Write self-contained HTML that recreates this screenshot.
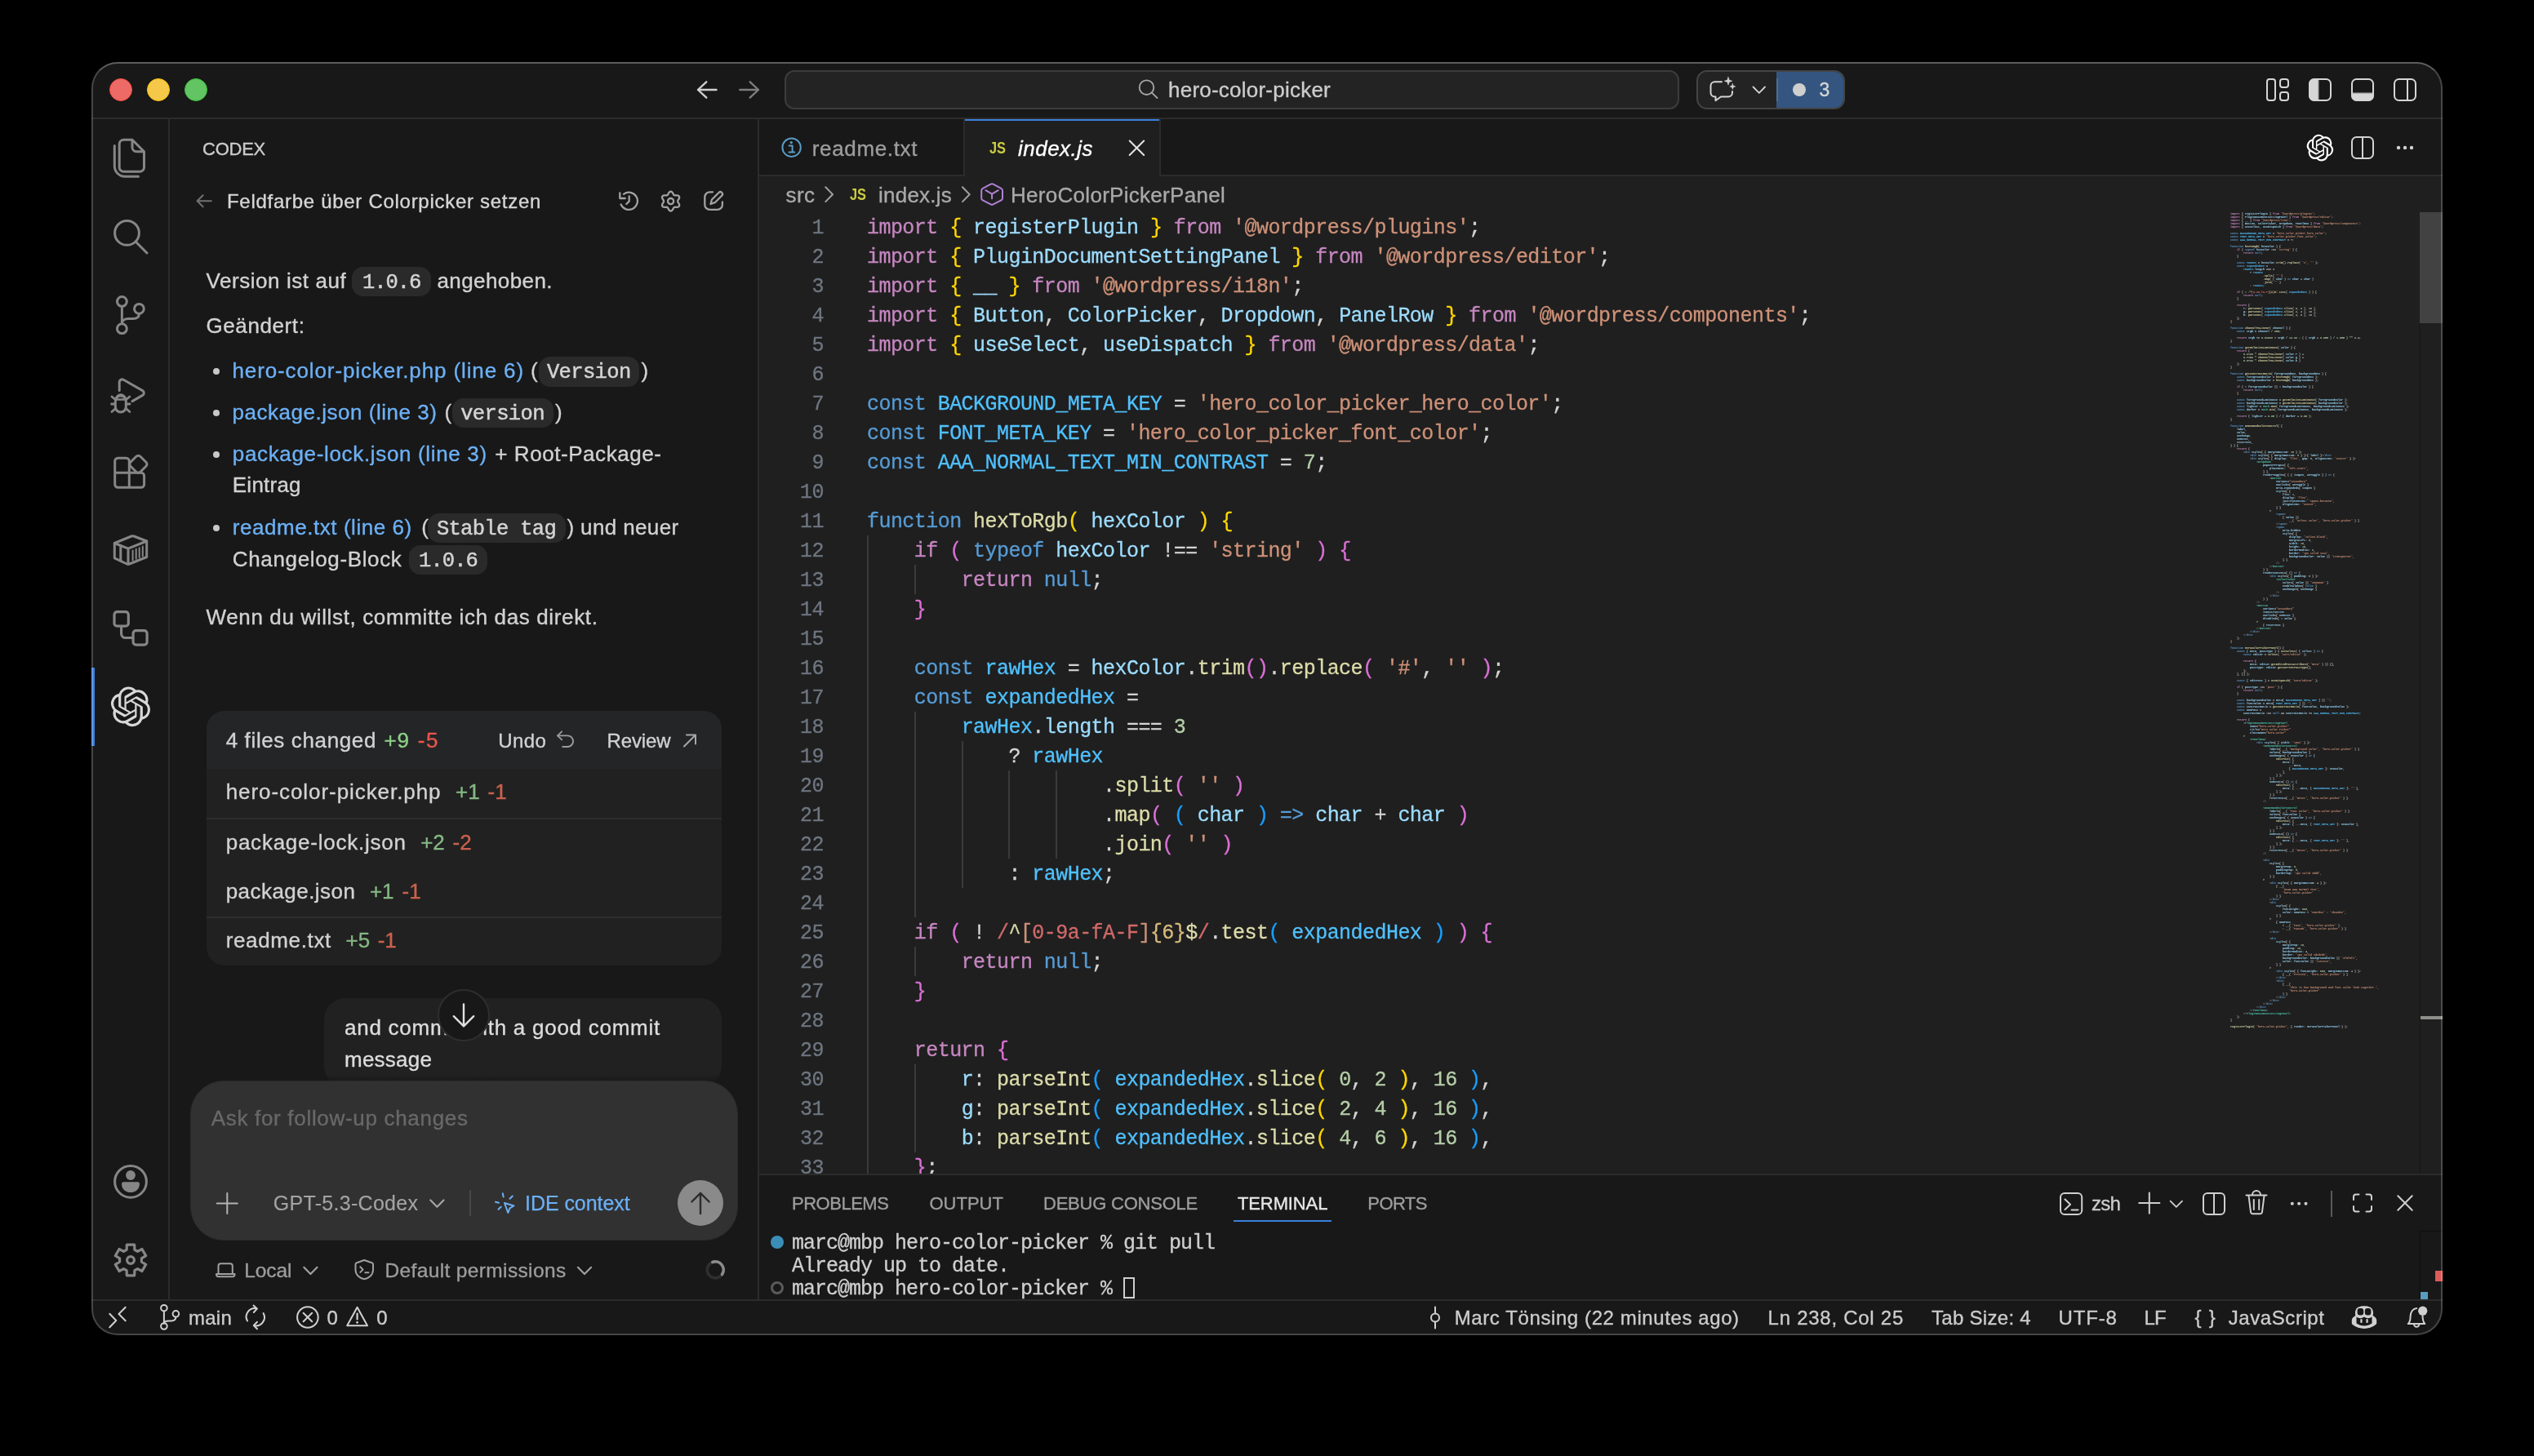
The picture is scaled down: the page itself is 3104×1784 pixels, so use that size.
<!DOCTYPE html>
<html><head><meta charset="utf-8"><title>hero-color-picker</title>
<style>
html,body{margin:0;padding:0;background:#000;}
body{width:3104px;height:1784px;overflow:hidden;position:relative;font-family:"Liberation Sans",sans-serif;}
#root{position:absolute;left:0;top:0;width:3104px;height:1784px;will-change:transform;}
.a{position:absolute;}
.t{position:absolute;white-space:pre;-webkit-text-stroke:0.35px;}
#win{position:absolute;left:112px;top:76px;width:2880px;height:1560px;border-radius:32px;background:#181818;overflow:hidden;}
#win>*{position:absolute;}
#frame{position:absolute;left:112px;top:76px;width:2880px;height:1560px;border-radius:32px;box-sizing:border-box;border:2px solid rgba(255,255,255,0.2);border-top-color:rgba(255,255,255,0.3);pointer-events:none;}
.code{position:absolute;left:0;white-space:pre;font-family:"Liberation Mono",monospace;font-size:25px;line-height:36px;height:36px;color:#d4d4d4;letter-spacing:-0.55px;-webkit-text-stroke:0.3px;}
.ln{position:absolute;white-space:pre;font-family:"Liberation Mono",monospace;font-size:25px;line-height:36px;height:36px;color:#6e7681;text-align:right;width:80px;letter-spacing:-0.55px;-webkit-text-stroke:0.3px;}
.g{position:absolute;width:2px;background:#3a3a3a;}
.k{color:#c586c0}.s{color:#569cd6}.v{color:#9cdcfe}.c{color:#4fc1ff}.f{color:#dcdcaa}.q{color:#ce9178}.n{color:#b5cea8}.b1{color:#ffd700}.b2{color:#da70d6}.b3{color:#179fff}.r{color:#d16969}.rq{color:#d7ba7d}.ty{color:#4ec9b0}.tg{color:#808080}
#mm{position:absolute;left:0;top:0;margin:0;font-family:"Liberation Mono",monospace;font-size:24px;line-height:36px;letter-spacing:0;color:#d4d4d4;transform-origin:0 0;transform:scale(0.13889,0.11111);opacity:0.95;font-weight:700;}
#mm i{font-style:normal}
#mm .b1,#mm .b2,#mm .b3{color:#d4d4d4}
svg{position:absolute;overflow:visible;}
</style></head><body>
<div id="root"><div id="win"></div>
<div class="a" style="left:930px;top:146px;width:2062px;height:1292px;background:#1f1f1f;"></div>
<div class="a" style="left:112px;top:144px;width:2880px;height:2px;background:#2b2b2b;"></div>
<div class="a" style="left:206px;top:146px;width:2px;height:1446px;background:#2b2b2b;"></div>
<div class="a" style="left:928px;top:146px;width:2px;height:1446px;background:#2b2b2b;"></div>
<div class="a" style="left:112px;top:1592px;width:2880px;height:2px;background:#2b2b2b;"></div>
<div class="a" style="left:930px;top:1438px;width:2062px;height:154px;background:#181818;"></div>
<div class="a" style="left:930px;top:1438px;width:2062px;height:2px;background:#2b2b2b;"></div>
<div class="a" style="left:930px;top:146px;width:2062px;height:70px;background:#181818;"></div>
<div class="a" style="left:930px;top:214px;width:2062px;height:2px;background:#2b2b2b;"></div>
<div class="a" style="left:1180px;top:146px;width:2px;height:68px;background:#2b2b2b;"></div>
<div class="a" style="left:1182px;top:146px;width:238px;height:70px;background:#1f1f1f;"></div>
<div class="a" style="left:1182px;top:146px;width:238px;height:2px;background:#3a7fdc;"></div>
<div class="a" style="left:1420px;top:146px;width:2px;height:68px;background:#2b2b2b;"></div>
<div class="a" style="left:134px;top:96px;width:28px;height:28px;background:#ed6a67;border-radius:50%;box-sizing:border-box;border:1px solid #fa4a42;"></div>
<div class="a" style="left:180px;top:96px;width:28px;height:28px;background:#f5c84a;border-radius:50%;box-sizing:border-box;border:1px solid #f9c20a;"></div>
<div class="a" style="left:226px;top:96px;width:28px;height:28px;background:#62c463;border-radius:50%;box-sizing:border-box;border:1px solid #3ec13c;"></div>
<div class="a" style="left:961px;top:86px;width:1096px;height:48px;background:#232323;border-radius:12px;box-sizing:border-box;border:2px solid #3c3c3c;"></div>
<div class="a" style="left:2078px;top:86px;width:182px;height:48px;background:#232323;border-radius:13px;box-sizing:border-box;border:2px solid #444444;overflow:hidden;"></div>
<div class="a" style="left:2176px;top:88px;width:82px;height:44px;background:#34557f;border-radius:0 11px 11px 0;"></div>
<div class="a" style="left:2176px;top:96px;width:2px;height:28px;background:#4f6d94;"></div>
<div class="a" style="left:2196px;top:102px;width:16px;height:16px;background:#cfcfcf;border-radius:50%;"></div>
<div class="a" style="left:431px;top:326.8px;width:96.5px;height:36.5px;background:#2a2a2a;border-radius:14px;"></div>
<div class="a" style="left:261px;top:451.1px;width:8px;height:8px;background:#c8c8c8;border-radius:50%;"></div>
<div class="a" style="left:261px;top:501.9px;width:8px;height:8px;background:#c8c8c8;border-radius:50%;"></div>
<div class="a" style="left:261px;top:552.7px;width:8px;height:8px;background:#c8c8c8;border-radius:50%;"></div>
<div class="a" style="left:261px;top:642.7px;width:8px;height:8px;background:#c8c8c8;border-radius:50%;"></div>
<div class="a" style="left:659.5px;top:437.1px;width:123.7px;height:36.5px;background:#2a2a2a;border-radius:14px;"></div>
<div class="a" style="left:553.8px;top:487.9px;width:124.2px;height:36.5px;background:#2a2a2a;border-radius:14px;"></div>
<div class="a" style="left:524px;top:628.7px;width:169px;height:36.5px;background:#2a2a2a;border-radius:14px;"></div>
<div class="a" style="left:501px;top:667.5px;width:96px;height:36.5px;background:#2a2a2a;border-radius:14px;"></div>
<div class="a" style="left:252.5px;top:871px;width:631.5px;height:311.5px;background:#212121;border-radius:22px;overflow:hidden;"></div>
<div class="a" style="left:252.5px;top:871px;width:631.5px;height:71px;background:#242527;border-radius:22px 22px 0 0;"></div>
<div class="a" style="left:252.5px;top:1002px;width:631.5px;height:1.5px;background:#2d2d2d;"></div>
<div class="a" style="left:252.5px;top:1123px;width:631.5px;height:1.5px;background:#2d2d2d;"></div>
<div class="a" style="left:397px;top:1223px;width:487px;height:109px;background:#212121;border-radius:26px;"></div>
<div class="a" style="left:930px;top:260px;width:2034px;height:1178px;overflow:hidden;">
<div class="g" style="left:132.0px;top:396px;height:792px;"></div>
<div class="g" style="left:189.8px;top:432px;height:36px;"></div>
<div class="g" style="left:189.8px;top:612px;height:252px;"></div>
<div class="g" style="left:189.8px;top:900px;height:36px;"></div>
<div class="g" style="left:189.8px;top:1044px;height:108px;"></div>
<div class="g" style="left:247.6px;top:648px;height:180px;"></div>
<div class="g" style="left:305.4px;top:684px;height:108px;"></div>
<div class="g" style="left:363.2px;top:684px;height:108px;"></div>
<div class="ln" style="left:0;top:2px;width:79px;">1</div>
<div class="code" style="left:132px;top:2px;"><span class="k">import</span> <span class="b1">{</span> <span class="v">registerPlugin</span> <span class="b1">}</span> <span class="k">from</span> <span class="q">&#x27;@wordpress/plugins&#x27;</span>;</div>
<div class="ln" style="left:0;top:38px;width:79px;">2</div>
<div class="code" style="left:132px;top:38px;"><span class="k">import</span> <span class="b1">{</span> <span class="v">PluginDocumentSettingPanel</span> <span class="b1">}</span> <span class="k">from</span> <span class="q">&#x27;@wordpress/editor&#x27;</span>;</div>
<div class="ln" style="left:0;top:74px;width:79px;">3</div>
<div class="code" style="left:132px;top:74px;"><span class="k">import</span> <span class="b1">{</span> <span class="v">__</span> <span class="b1">}</span> <span class="k">from</span> <span class="q">&#x27;@wordpress/i18n&#x27;</span>;</div>
<div class="ln" style="left:0;top:110px;width:79px;">4</div>
<div class="code" style="left:132px;top:110px;"><span class="k">import</span> <span class="b1">{</span> <span class="v">Button</span>, <span class="v">ColorPicker</span>, <span class="v">Dropdown</span>, <span class="v">PanelRow</span> <span class="b1">}</span> <span class="k">from</span> <span class="q">&#x27;@wordpress/components&#x27;</span>;</div>
<div class="ln" style="left:0;top:146px;width:79px;">5</div>
<div class="code" style="left:132px;top:146px;"><span class="k">import</span> <span class="b1">{</span> <span class="v">useSelect</span>, <span class="v">useDispatch</span> <span class="b1">}</span> <span class="k">from</span> <span class="q">&#x27;@wordpress/data&#x27;</span>;</div>
<div class="ln" style="left:0;top:182px;width:79px;">6</div>
<div class="ln" style="left:0;top:218px;width:79px;">7</div>
<div class="code" style="left:132px;top:218px;"><span class="s">const</span> <span class="c">BACKGROUND_META_KEY</span> = <span class="q">&#x27;hero_color_picker_hero_color&#x27;</span>;</div>
<div class="ln" style="left:0;top:254px;width:79px;">8</div>
<div class="code" style="left:132px;top:254px;"><span class="s">const</span> <span class="c">FONT_META_KEY</span> = <span class="q">&#x27;hero_color_picker_font_color&#x27;</span>;</div>
<div class="ln" style="left:0;top:290px;width:79px;">9</div>
<div class="code" style="left:132px;top:290px;"><span class="s">const</span> <span class="c">AAA_NORMAL_TEXT_MIN_CONTRAST</span> = <span class="n">7</span>;</div>
<div class="ln" style="left:0;top:326px;width:79px;">10</div>
<div class="ln" style="left:0;top:362px;width:79px;">11</div>
<div class="code" style="left:132px;top:362px;"><span class="s">function</span> <span class="f">hexToRgb</span><span class="b1">(</span> <span class="v">hexColor</span> <span class="b1">)</span> <span class="b1">{</span></div>
<div class="ln" style="left:0;top:398px;width:79px;">12</div>
<div class="code" style="left:132px;top:398px;">    <span class="k">if</span> <span class="b2">(</span> <span class="s">typeof</span> <span class="v">hexColor</span> !== <span class="q">&#x27;string&#x27;</span> <span class="b2">)</span> <span class="b2">{</span></div>
<div class="ln" style="left:0;top:434px;width:79px;">13</div>
<div class="code" style="left:132px;top:434px;">        <span class="k">return</span> <span class="s">null</span>;</div>
<div class="ln" style="left:0;top:470px;width:79px;">14</div>
<div class="code" style="left:132px;top:470px;">    <span class="b2">}</span></div>
<div class="ln" style="left:0;top:506px;width:79px;">15</div>
<div class="ln" style="left:0;top:542px;width:79px;">16</div>
<div class="code" style="left:132px;top:542px;">    <span class="s">const</span> <span class="c">rawHex</span> = <span class="v">hexColor</span>.<span class="f">trim</span><span class="b2">()</span>.<span class="f">replace</span><span class="b2">(</span> <span class="q">&#x27;#&#x27;</span>, <span class="q">&#x27;&#x27;</span> <span class="b2">)</span>;</div>
<div class="ln" style="left:0;top:578px;width:79px;">17</div>
<div class="code" style="left:132px;top:578px;">    <span class="s">const</span> <span class="c">expandedHex</span> =</div>
<div class="ln" style="left:0;top:614px;width:79px;">18</div>
<div class="code" style="left:132px;top:614px;">        <span class="c">rawHex</span>.<span class="v">length</span> === <span class="n">3</span></div>
<div class="ln" style="left:0;top:650px;width:79px;">19</div>
<div class="code" style="left:132px;top:650px;">            ? <span class="c">rawHex</span></div>
<div class="ln" style="left:0;top:686px;width:79px;">20</div>
<div class="code" style="left:132px;top:686px;">                    .<span class="f">split</span><span class="b2">(</span> <span class="q">&#x27;&#x27;</span> <span class="b2">)</span></div>
<div class="ln" style="left:0;top:722px;width:79px;">21</div>
<div class="code" style="left:132px;top:722px;">                    .<span class="f">map</span><span class="b2">(</span> <span class="b3">(</span> <span class="v">char</span> <span class="b3">)</span> <span class="s">=&gt;</span> <span class="v">char</span> + <span class="v">char</span> <span class="b2">)</span></div>
<div class="ln" style="left:0;top:758px;width:79px;">22</div>
<div class="code" style="left:132px;top:758px;">                    .<span class="f">join</span><span class="b2">(</span> <span class="q">&#x27;&#x27;</span> <span class="b2">)</span></div>
<div class="ln" style="left:0;top:794px;width:79px;">23</div>
<div class="code" style="left:132px;top:794px;">            : <span class="c">rawHex</span>;</div>
<div class="ln" style="left:0;top:830px;width:79px;">24</div>
<div class="ln" style="left:0;top:866px;width:79px;">25</div>
<div class="code" style="left:132px;top:866px;">    <span class="k">if</span> <span class="b2">(</span> ! <span class="r">/</span><span class="f">^</span><span class="q">[</span><span class="r">0-9a-fA-F</span><span class="q">]</span><span class="rq">{6}</span><span class="f">$</span><span class="r">/</span>.<span class="f">test</span><span class="b3">(</span> <span class="c">expandedHex</span> <span class="b3">)</span> <span class="b2">)</span> <span class="b2">{</span></div>
<div class="ln" style="left:0;top:902px;width:79px;">26</div>
<div class="code" style="left:132px;top:902px;">        <span class="k">return</span> <span class="s">null</span>;</div>
<div class="ln" style="left:0;top:938px;width:79px;">27</div>
<div class="code" style="left:132px;top:938px;">    <span class="b2">}</span></div>
<div class="ln" style="left:0;top:974px;width:79px;">28</div>
<div class="ln" style="left:0;top:1010px;width:79px;">29</div>
<div class="code" style="left:132px;top:1010px;">    <span class="k">return</span> <span class="b2">{</span></div>
<div class="ln" style="left:0;top:1046px;width:79px;">30</div>
<div class="code" style="left:132px;top:1046px;">        <span class="v">r</span>: <span class="f">parseInt</span><span class="b3">(</span> <span class="c">expandedHex</span>.<span class="f">slice</span><span class="b1">(</span> <span class="n">0</span>, <span class="n">2</span> <span class="b1">)</span>, <span class="n">16</span> <span class="b3">)</span>,</div>
<div class="ln" style="left:0;top:1082px;width:79px;">31</div>
<div class="code" style="left:132px;top:1082px;">        <span class="v">g</span>: <span class="f">parseInt</span><span class="b3">(</span> <span class="c">expandedHex</span>.<span class="f">slice</span><span class="b1">(</span> <span class="n">2</span>, <span class="n">4</span> <span class="b1">)</span>, <span class="n">16</span> <span class="b3">)</span>,</div>
<div class="ln" style="left:0;top:1118px;width:79px;">32</div>
<div class="code" style="left:132px;top:1118px;">        <span class="v">b</span>: <span class="f">parseInt</span><span class="b3">(</span> <span class="c">expandedHex</span>.<span class="f">slice</span><span class="b1">(</span> <span class="n">4</span>, <span class="n">6</span> <span class="b1">)</span>, <span class="n">16</span> <span class="b3">)</span>,</div>
<div class="ln" style="left:0;top:1154px;width:79px;">33</div>
<div class="code" style="left:132px;top:1154px;">    <span class="b2">}</span>;</div>
</div>
<div class="a" style="left:2732px;top:260px;width:232px;height:1178px;overflow:hidden;"><pre id="mm"><i class="k">import</i> <i class="b1">{</i> <i class="v">registerPlugin</i> <i class="b1">}</i> <i class="k">from</i> <i class="q">&#x27;@wordpress/plugins&#x27;</i>;
<i class="k">import</i> <i class="b1">{</i> <i class="v">PluginDocumentSettingPanel</i> <i class="b1">}</i> <i class="k">from</i> <i class="q">&#x27;@wordpress/editor&#x27;</i>;
<i class="k">import</i> <i class="b1">{</i> <i class="v">__</i> <i class="b1">}</i> <i class="k">from</i> <i class="q">&#x27;@wordpress/i18n&#x27;</i>;
<i class="k">import</i> <i class="b1">{</i> <i class="v">Button</i>, <i class="v">ColorPicker</i>, <i class="v">Dropdown</i>, <i class="v">PanelRow</i> <i class="b1">}</i> <i class="k">from</i> <i class="q">&#x27;@wordpress/components&#x27;</i>;
<i class="k">import</i> <i class="b1">{</i> <i class="v">useSelect</i>, <i class="v">useDispatch</i> <i class="b1">}</i> <i class="k">from</i> <i class="q">&#x27;@wordpress/data&#x27;</i>;

<i class="s">const</i> <i class="c">BACKGROUND_META_KEY</i> = <i class="q">&#x27;hero_color_picker_hero_color&#x27;</i>;
<i class="s">const</i> <i class="c">FONT_META_KEY</i> = <i class="q">&#x27;hero_color_picker_font_color&#x27;</i>;
<i class="s">const</i> <i class="c">AAA_NORMAL_TEXT_MIN_CONTRAST</i> = <i class="n">7</i>;

<i class="s">function</i> <i class="f">hexToRgb</i><i class="b1">(</i> <i class="v">hexColor</i> <i class="b1">)</i> <i class="b1">{</i>
    <i class="k">if</i> <i class="b2">(</i> <i class="s">typeof</i> <i class="v">hexColor</i> !== <i class="q">&#x27;string&#x27;</i> <i class="b2">)</i> <i class="b2">{</i>
        <i class="k">return</i> <i class="s">null</i>;
    <i class="b2">}</i>

    <i class="s">const</i> <i class="c">rawHex</i> = <i class="v">hexColor</i>.<i class="f">trim</i><i class="b2">()</i>.<i class="f">replace</i><i class="b2">(</i> <i class="q">&#x27;#&#x27;</i>, <i class="q">&#x27;&#x27;</i> <i class="b2">)</i>;
    <i class="s">const</i> <i class="c">expandedHex</i> =
        <i class="c">rawHex</i>.<i class="v">length</i> === <i class="n">3</i>
            ? <i class="c">rawHex</i>
                    .<i class="f">split</i><i class="b2">(</i> <i class="q">&#x27;&#x27;</i> <i class="b2">)</i>
                    .<i class="f">map</i><i class="b2">(</i> <i class="b3">(</i> <i class="v">char</i> <i class="b3">)</i> <i class="s">=&gt;</i> <i class="v">char</i> + <i class="v">char</i> <i class="b2">)</i>
                    .<i class="f">join</i><i class="b2">(</i> <i class="q">&#x27;&#x27;</i> <i class="b2">)</i>
            : <i class="c">rawHex</i>;

    <i class="k">if</i> <i class="b2">(</i> ! <i class="r">/</i><i class="f">^</i><i class="q">[</i><i class="r">0-9a-fA-F</i><i class="q">]</i><i class="rq">{6}</i><i class="f">$</i><i class="r">/</i>.<i class="f">test</i><i class="b3">(</i> <i class="c">expandedHex</i> <i class="b3">)</i> <i class="b2">)</i> <i class="b2">{</i>
        <i class="k">return</i> <i class="s">null</i>;
    <i class="b2">}</i>

    <i class="k">return</i> <i class="b2">{</i>
        <i class="v">r</i>: <i class="f">parseInt</i><i class="b3">(</i> <i class="c">expandedHex</i>.<i class="f">slice</i><i class="b1">(</i> <i class="n">0</i>, <i class="n">2</i> <i class="b1">)</i>, <i class="n">16</i> <i class="b3">)</i>,
        <i class="v">g</i>: <i class="f">parseInt</i><i class="b3">(</i> <i class="c">expandedHex</i>.<i class="f">slice</i><i class="b1">(</i> <i class="n">2</i>, <i class="n">4</i> <i class="b1">)</i>, <i class="n">16</i> <i class="b3">)</i>,
        <i class="v">b</i>: <i class="f">parseInt</i><i class="b3">(</i> <i class="c">expandedHex</i>.<i class="f">slice</i><i class="b1">(</i> <i class="n">4</i>, <i class="n">6</i> <i class="b1">)</i>, <i class="n">16</i> <i class="b3">)</i>,
    <i class="b2">}</i>;
<i class="b1">}</i>

<i class="s">function</i> <i class="f">channelToLinear</i><i class="b1">(</i> <i class="v">channel</i> <i class="b1">)</i> <i class="b1">{</i>
    <i class="s">const</i> <i class="v">srgb</i> = <i class="v">channel</i> / <i class="n">255</i>;

    <i class="k">return</i> <i class="v">srgb</i> &lt;= <i class="n">0.03928</i> ? <i class="v">srgb</i> / <i class="n">12.92</i> : <i class="b2">(</i> <i class="b3">(</i> <i class="v">srgb</i> + <i class="n">0.055</i> <i class="b3">)</i> / <i class="n">1.055</i> <i class="b2">)</i> ** <i class="n">2.4</i>;
<i class="b1">}</i>

<i class="s">function</i> <i class="f">getRelativeLuminance</i><i class="b1">(</i> <i class="v">color</i> <i class="b1">)</i> <i class="b1">{</i>
    <i class="k">return</i> <i class="b2">(</i>
        <i class="n">0.2126</i> * <i class="f">channelToLinear</i><i class="b3">(</i> <i class="v">color</i>.<i class="v">r</i> <i class="b3">)</i> +
        <i class="n">0.7152</i> * <i class="f">channelToLinear</i><i class="b3">(</i> <i class="v">color</i>.<i class="v">g</i> <i class="b3">)</i> +
        <i class="n">0.0722</i> * <i class="f">channelToLinear</i><i class="b3">(</i> <i class="v">color</i>.<i class="v">b</i> <i class="b3">)</i>
    <i class="b2">)</i>;
<i class="b1">}</i>

<i class="s">function</i> <i class="f">getContrastRatio</i><i class="b1">(</i> <i class="v">foregroundHex</i>, <i class="v">backgroundHex</i> <i class="b1">)</i> <i class="b1">{</i>
    <i class="s">const</i> <i class="v">foregroundColor</i> = <i class="f">hexToRgb</i><i class="b2">(</i> <i class="v">foregroundHex</i> <i class="b2">)</i>;
    <i class="s">const</i> <i class="v">backgroundColor</i> = <i class="f">hexToRgb</i><i class="b2">(</i> <i class="v">backgroundHex</i> <i class="b2">)</i>;

    <i class="k">if</i> <i class="b2">(</i> ! <i class="v">foregroundColor</i> || ! <i class="v">backgroundColor</i> <i class="b2">)</i> <i class="b2">{</i>
        <i class="k">return</i> <i class="s">null</i>;
    <i class="b2">}</i>

    <i class="s">const</i> <i class="v">foregroundLuminance</i> = <i class="f">getRelativeLuminance</i><i class="b2">(</i> <i class="v">foregroundColor</i> <i class="b2">)</i>;
    <i class="s">const</i> <i class="v">backgroundLuminance</i> = <i class="f">getRelativeLuminance</i><i class="b2">(</i> <i class="v">backgroundColor</i> <i class="b2">)</i>;
    <i class="s">const</i> <i class="v">lighter</i> = <i class="ty">Math</i>.<i class="f">max</i><i class="b2">(</i> <i class="v">foregroundLuminance</i>, <i class="v">backgroundLuminance</i> <i class="b2">)</i>;
    <i class="s">const</i> <i class="v">darker</i> = <i class="ty">Math</i>.<i class="f">min</i><i class="b2">(</i> <i class="v">foregroundLuminance</i>, <i class="v">backgroundLuminance</i> <i class="b2">)</i>;

    <i class="k">return</i> <i class="b2">(</i> <i class="v">lighter</i> + <i class="n">0.05</i> <i class="b2">)</i> / <i class="b2">(</i> <i class="v">darker</i> + <i class="n">0.05</i> <i class="b2">)</i>;
<i class="b1">}</i>

<i class="s">function</i> <i class="f">OnDemandColorControl</i><i class="b1">(</i> <i class="b2">{</i>
    <i class="v">label</i>,
    <i class="v">value</i>,
    <i class="v">onChange</i>,
    <i class="v">onReset</i>,
    <i class="v">resetText</i>,
<i class="b2">}</i> <i class="b1">)</i> <i class="b1">{</i>
    <i class="k">return</i> <i class="b2">(</i>
        <i class="tg">&lt;</i><i class="s">div</i> <i class="v">style</i>=<i class="b3">{</i> <i class="b1">{</i> <i class="v">marginBottom</i>: <i class="n">16</i> <i class="b1">}</i> <i class="b3">}</i><i class="tg">&gt;</i>
            <i class="tg">&lt;</i><i class="s">div</i> <i class="v">style</i>=<i class="b3">{</i> <i class="b1">{</i> <i class="v">marginBottom</i>: <i class="n">8</i> <i class="b1">}</i> <i class="b3">}</i><i class="tg">&gt;</i><i class="b3">{</i> <i class="v">label</i> <i class="b3">}</i><i class="tg">&lt;/</i><i class="s">div</i><i class="tg">&gt;</i>
            <i class="tg">&lt;</i><i class="s">div</i> <i class="v">style</i>=<i class="b3">{</i> <i class="b1">{</i> <i class="v">display</i>: <i class="q">&#x27;flex&#x27;</i>, <i class="v">gap</i>: <i class="n">8</i>, <i class="v">alignItems</i>: <i class="q">&#x27;center&#x27;</i> <i class="b1">}</i> <i class="b3">}</i><i class="tg">&gt;</i>
                <i class="tg">&lt;</i><i class="ty">Dropdown</i>
                    <i class="v">popoverProps</i>=<i class="b3">{</i> <i class="b1">{</i>
                        <i class="v">placement</i>: <i class="q">&#x27;left-start&#x27;</i>,
                    <i class="b1">}</i> <i class="b3">}</i>
                    <i class="v">renderToggle</i>=<i class="b3">{</i> <i class="b1">(</i> <i class="b2">{</i> <i class="v">isOpen</i>, <i class="v">onToggle</i> <i class="b2">}</i> <i class="b1">)</i> <i class="s">=&gt;</i> <i class="b1">(</i>
                        <i class="tg">&lt;</i><i class="ty">Button</i>
                            <i class="v">variant</i>=<i class="q">&quot;secondary&quot;</i>
                            <i class="v">onClick</i>=<i class="b2">{</i> <i class="v">onToggle</i> <i class="b2">}</i>
                            <i class="v">aria-expanded</i>=<i class="b2">{</i> <i class="v">isOpen</i> <i class="b2">}</i>
                            <i class="v">style</i>=<i class="b2">{</i> <i class="b3">{</i>
                                <i class="v">flex</i>: <i class="n">1</i>,
                                <i class="v">display</i>: <i class="q">&#x27;flex&#x27;</i>,
                                <i class="v">justifyContent</i>: <i class="q">&#x27;space-between&#x27;</i>,
                                <i class="v">alignItems</i>: <i class="q">&#x27;center&#x27;</i>,
                            <i class="b3">}</i> <i class="b2">}</i>
                        &gt;
                            <i class="tg">&lt;</i><i class="s">span</i><i class="tg">&gt;</i>
                                <i class="b2">{</i> <i class="v">value</i> ||
                                    <i class="f">__</i><i class="b3">(</i> <i class="q">&#x27;Select color&#x27;</i>, <i class="q">&#x27;hero-color-picker&#x27;</i> <i class="b3">)</i> <i class="b2">}</i>
                            <i class="tg">&lt;/</i><i class="s">span</i><i class="tg">&gt;</i>
                            <i class="tg">&lt;</i><i class="s">span</i>
                                <i class="v">aria-hidden</i>
                                <i class="v">style</i>=<i class="b2">{</i> <i class="b3">{</i>
                                    <i class="v">display</i>: <i class="q">&#x27;inline-block&#x27;</i>,
                                    <i class="v">marginLeft</i>: <i class="n">8</i>,
                                    <i class="v">width</i>: <i class="n">16</i>,
                                    <i class="v">height</i>: <i class="n">16</i>,
                                    <i class="v">borderRadius</i>: <i class="n">2</i>,
                                    <i class="v">border</i>: <i class="q">&#x27;1px solid #ccc&#x27;</i>,
                                    <i class="v">backgroundColor</i>: <i class="v">value</i> || <i class="q">&#x27;transparent&#x27;</i>,
                                <i class="b3">}</i> <i class="b2">}</i>
                            <i class="tg">/&gt;</i>
                        <i class="tg">&lt;/</i><i class="ty">Button</i><i class="tg">&gt;</i>
                    <i class="b1">)</i> <i class="b3">}</i>
                    <i class="v">renderContent</i>=<i class="b3">{</i> <i class="b1">(</i><i class="b1">)</i> <i class="s">=&gt;</i> <i class="b1">(</i>
                        <i class="tg">&lt;</i><i class="s">div</i> <i class="v">style</i>=<i class="b2">{</i> <i class="b3">{</i> <i class="v">padding</i>: <i class="n">8</i> <i class="b3">}</i> <i class="b2">}</i><i class="tg">&gt;</i>
                            <i class="tg">&lt;</i><i class="ty">ColorPicker</i>
                                <i class="v">color</i>=<i class="b2">{</i> <i class="v">value</i> || <i class="q">&#x27;#000000&#x27;</i> <i class="b2">}</i>
                                <i class="v">enableAlpha</i>=<i class="b2">{</i> <i class="s">false</i> <i class="b2">}</i>
                                <i class="v">onChange</i>=<i class="b2">{</i> <i class="v">onChange</i> <i class="b2">}</i>
                            <i class="tg">/&gt;</i>
                        <i class="tg">&lt;/</i><i class="s">div</i><i class="tg">&gt;</i>
                    <i class="b1">)</i> <i class="b3">}</i>
                <i class="tg">/&gt;</i>
                <i class="tg">&lt;</i><i class="ty">Button</i>
                    <i class="v">variant</i>=<i class="q">&quot;secondary&quot;</i>
                    <i class="v">isDestructive</i>
                    <i class="v">onClick</i>=<i class="b3">{</i> <i class="v">onReset</i> <i class="b3">}</i>
                    <i class="v">disabled</i>=<i class="b3">{</i> ! <i class="v">value</i> <i class="b3">}</i>
                &gt;
                    <i class="b3">{</i> <i class="v">resetText</i> <i class="b3">}</i>
                <i class="tg">&lt;/</i><i class="ty">Button</i><i class="tg">&gt;</i>
            <i class="tg">&lt;/</i><i class="s">div</i><i class="tg">&gt;</i>
        <i class="tg">&lt;/</i><i class="s">div</i><i class="tg">&gt;</i>
    <i class="b2">)</i>;
<i class="b1">}</i>

<i class="s">function</i> <i class="f">HeroColorPickerPanel</i><i class="b1">(</i><i class="b1">)</i> <i class="b1">{</i>
    <i class="s">const</i> <i class="b2">{</i> <i class="v">meta</i>, <i class="v">postType</i> <i class="b2">}</i> = <i class="f">useSelect</i><i class="b2">(</i> <i class="b3">(</i> <i class="v">select</i> <i class="b3">)</i> <i class="s">=&gt;</i> <i class="b3">{</i>
        <i class="s">const</i> <i class="v">editor</i> = <i class="f">select</i><i class="b1">(</i> <i class="q">&#x27;core/editor&#x27;</i> <i class="b1">)</i>;

        <i class="k">return</i> <i class="b1">{</i>
            <i class="v">meta</i>: <i class="v">editor</i>.<i class="f">getEditedPostAttribute</i><i class="b2">(</i> <i class="q">&#x27;meta&#x27;</i> <i class="b2">)</i> || <i class="b2">{</i><i class="b2">}</i>,
            <i class="v">postType</i>: <i class="v">editor</i>.<i class="f">getCurrentPostType</i><i class="b2">(</i><i class="b2">)</i>,
        <i class="b1">}</i>;
    <i class="b3">}</i>, <i class="b3">[</i><i class="b3">]</i> <i class="b2">)</i>;

    <i class="s">const</i> <i class="b2">{</i> <i class="v">editPost</i> <i class="b2">}</i> = <i class="f">useDispatch</i><i class="b2">(</i> <i class="q">&#x27;core/editor&#x27;</i> <i class="b2">)</i>;

    <i class="k">if</i> <i class="b2">(</i> <i class="v">postType</i> !== <i class="q">&#x27;post&#x27;</i> <i class="b2">)</i> <i class="b2">{</i>
        <i class="k">return</i> <i class="s">null</i>;
    <i class="b2">}</i>

    <i class="s">const</i> <i class="v">backgroundValue</i> = <i class="v">meta</i><i class="b2">[</i> <i class="c">BACKGROUND_META_KEY</i> <i class="b2">]</i> || <i class="q">&#x27;&#x27;</i>;
    <i class="s">const</i> <i class="v">fontValue</i> = <i class="v">meta</i><i class="b2">[</i> <i class="c">FONT_META_KEY</i> <i class="b2">]</i> || <i class="q">&#x27;&#x27;</i>;
    <i class="s">const</i> <i class="v">contrastRatio</i> = <i class="f">getContrastRatio</i><i class="b2">(</i> <i class="v">fontValue</i>, <i class="v">backgroundValue</i> <i class="b2">)</i>;
    <i class="s">const</i> <i class="v">aaaPass</i> =
        <i class="v">contrastRatio</i> !== <i class="s">null</i> &amp;&amp; <i class="v">contrastRatio</i> &gt;= <i class="c">AAA_NORMAL_TEXT_MIN_CONTRAST</i>;

    <i class="k">return</i> <i class="b2">(</i>
        <i class="tg">&lt;</i><i class="ty">PluginDocumentSettingPanel</i>
            <i class="v">name</i>=<i class="q">&quot;hero-color-picker&quot;</i>
            <i class="v">title</i>=<i class="q">&quot;Hero Color Picker&quot;</i>
            <i class="v">className</i>=<i class="q">&quot;hero-color&quot;</i>
        &gt;
            <i class="tg">&lt;</i><i class="ty">PanelRow</i><i class="tg">&gt;</i>
                <i class="tg">&lt;</i><i class="s">div</i> <i class="v">style</i>=<i class="b3">{</i> <i class="b1">{</i> <i class="v">width</i>: <i class="q">&#x27;100%&#x27;</i> <i class="b1">}</i> <i class="b3">}</i><i class="tg">&gt;</i>
                    <i class="tg">&lt;</i><i class="ty">OnDemandColorControl</i>
                        <i class="v">label</i>=<i class="b3">{</i> <i class="f">__</i><i class="b1">(</i> <i class="q">&#x27;Background Color&#x27;</i>, <i class="q">&#x27;hero-color-picker&#x27;</i> <i class="b1">)</i> <i class="b3">}</i>
                        <i class="v">value</i>=<i class="b3">{</i> <i class="v">backgroundValue</i> <i class="b3">}</i>
                        <i class="v">onChange</i>=<i class="b3">{</i> <i class="b1">(</i> <i class="v">newColor</i> <i class="b1">)</i> <i class="s">=&gt;</i> <i class="b1">{</i>
                            <i class="f">editPost</i><i class="b2">(</i> <i class="b3">{</i>
                                <i class="v">meta</i>: <i class="b1">{</i>
                                    ...<i class="v">meta</i>,
                                    <i class="b2">[</i> <i class="c">BACKGROUND_META_KEY</i> <i class="b2">]</i>: <i class="v">newColor</i>,
                                <i class="b1">}</i>,
                            <i class="b3">}</i> <i class="b2">)</i>;
                        <i class="b1">}</i> <i class="b3">}</i>
                        <i class="v">onReset</i>=<i class="b3">{</i> <i class="b1">(</i><i class="b1">)</i> <i class="s">=&gt;</i> <i class="b1">{</i>
                            <i class="f">editPost</i><i class="b2">(</i> <i class="b3">{</i>
                                <i class="v">meta</i>: <i class="b1">{</i> ...<i class="v">meta</i>, <i class="b2">[</i> <i class="c">BACKGROUND_META_KEY</i> <i class="b2">]</i>: <i class="q">&#x27;&#x27;</i> <i class="b1">}</i>,
                            <i class="b3">}</i> <i class="b2">)</i>;
                        <i class="b1">}</i> <i class="b3">}</i>
                        <i class="v">resetText</i>=<i class="b3">{</i> <i class="f">__</i><i class="b1">(</i> <i class="q">&#x27;Reset&#x27;</i>, <i class="q">&#x27;hero-color-picker&#x27;</i> <i class="b1">)</i> <i class="b3">}</i>
                    <i class="tg">/&gt;</i>

                    <i class="tg">&lt;</i><i class="ty">OnDemandColorControl</i>
                        <i class="v">label</i>=<i class="b3">{</i> <i class="f">__</i><i class="b1">(</i> <i class="q">&#x27;Font Color&#x27;</i>, <i class="q">&#x27;hero-color-picker&#x27;</i> <i class="b1">)</i> <i class="b3">}</i>
                        <i class="v">value</i>=<i class="b3">{</i> <i class="v">fontValue</i> <i class="b3">}</i>
                        <i class="v">onChange</i>=<i class="b3">{</i> <i class="b1">(</i> <i class="v">newColor</i> <i class="b1">)</i> <i class="s">=&gt;</i> <i class="b1">{</i>
                            <i class="f">editPost</i><i class="b2">(</i> <i class="b3">{</i>
                                <i class="v">meta</i>: <i class="b1">{</i> ...<i class="v">meta</i>, <i class="b2">[</i> <i class="c">FONT_META_KEY</i> <i class="b2">]</i>: <i class="v">newColor</i> <i class="b1">}</i>,
                            <i class="b3">}</i> <i class="b2">)</i>;
                        <i class="b1">}</i> <i class="b3">}</i>
                        <i class="v">onReset</i>=<i class="b3">{</i> <i class="b1">(</i><i class="b1">)</i> <i class="s">=&gt;</i> <i class="b1">{</i>
                            <i class="f">editPost</i><i class="b2">(</i> <i class="b3">{</i>
                                <i class="v">meta</i>: <i class="b1">{</i> ...<i class="v">meta</i>, <i class="b2">[</i> <i class="c">FONT_META_KEY</i> <i class="b2">]</i>: <i class="q">&#x27;&#x27;</i> <i class="b1">}</i>,
                            <i class="b3">}</i> <i class="b2">)</i>;
                        <i class="b1">}</i> <i class="b3">}</i>
                        <i class="v">resetText</i>=<i class="b3">{</i> <i class="f">__</i><i class="b1">(</i> <i class="q">&#x27;Reset&#x27;</i>, <i class="q">&#x27;hero-color-picker&#x27;</i> <i class="b1">)</i> <i class="b3">}</i>
                    <i class="tg">/&gt;</i>

                    <i class="tg">&lt;</i><i class="s">div</i>
                        <i class="v">style</i>=<i class="b3">{</i> <i class="b1">{</i>
                            <i class="v">marginTop</i>: <i class="n">8</i>,
                            <i class="v">paddingTop</i>: <i class="n">8</i>,
                            <i class="v">borderTop</i>: <i class="q">&#x27;1px solid #ddd&#x27;</i>,
                        <i class="b1">}</i> <i class="b3">}</i>
                    &gt;
                        <i class="tg">&lt;</i><i class="s">div</i> <i class="v">style</i>=<i class="b3">{</i> <i class="b1">{</i> <i class="v">marginBottom</i>: <i class="n">4</i> <i class="b1">}</i> <i class="b3">}</i><i class="tg">&gt;</i>
                            <i class="b3">{</i> <i class="f">__</i><i class="b1">(</i>
                                <i class="q">&#x27;WCAG AAA Normal Text&#x27;</i>,
                                <i class="q">&#x27;hero-color-picker&#x27;</i>
                            <i class="b1">)</i> <i class="b3">}</i>
                        <i class="tg">&lt;/</i><i class="s">div</i><i class="tg">&gt;</i>
                        <i class="tg">&lt;</i><i class="s">div</i>
                            <i class="v">style</i>=<i class="b3">{</i> <i class="b1">{</i>
                                <i class="v">fontWeight</i>: <i class="n">600</i>,
                                <i class="v">color</i>: <i class="v">aaaPass</i> ? <i class="q">&#x27;#0a7d33&#x27;</i> : <i class="q">&#x27;#b32d2e&#x27;</i>,
                            <i class="b1">}</i> <i class="b3">}</i>
                        &gt;
                            <i class="b3">{</i> <i class="v">aaaPass</i>
                                ? <i class="f">__</i><i class="b1">(</i> <i class="q">&#x27;PASS&#x27;</i>, <i class="q">&#x27;hero-color-picker&#x27;</i> <i class="b1">)</i>
                                : <i class="f">__</i><i class="b1">(</i> <i class="q">&#x27;FAILED&#x27;</i>, <i class="q">&#x27;hero-color-picker&#x27;</i> <i class="b1">)</i> <i class="b3">}</i>
                        <i class="tg">&lt;/</i><i class="s">div</i><i class="tg">&gt;</i>

                        <i class="tg">&lt;</i><i class="s">div</i>
                            <i class="v">style</i>=<i class="b3">{</i> <i class="b1">{</i>
                                <i class="v">marginTop</i>: <i class="n">10</i>,
                                <i class="v">padding</i>: <i class="n">10</i>,
                                <i class="v">borderRadius</i>: <i class="n">4</i>,
                                <i class="v">border</i>: <i class="q">&#x27;1px solid #dcdcde&#x27;</i>,
                                <i class="v">backgroundColor</i>: <i class="v">backgroundValue</i> || <i class="q">&#x27;#f0f0f1&#x27;</i>,
                                <i class="v">color</i>: <i class="v">fontValue</i> || <i class="q">&#x27;#1e1e1e&#x27;</i>,
                            <i class="b1">}</i> <i class="b3">}</i>
                        &gt;
                            <i class="tg">&lt;</i><i class="s">div</i> <i class="v">style</i>=<i class="b3">{</i> <i class="b1">{</i> <i class="v">fontWeight</i>: <i class="n">600</i>, <i class="v">marginBottom</i>: <i class="n">4</i> <i class="b1">}</i> <i class="b3">}</i><i class="tg">&gt;</i>
                                <i class="b3">{</i> <i class="f">__</i><i class="b1">(</i> <i class="q">&#x27;Preview&#x27;</i>, <i class="q">&#x27;hero-color-picker&#x27;</i> <i class="b1">)</i> <i class="b3">}</i>
                            <i class="tg">&lt;/</i><i class="s">div</i><i class="tg">&gt;</i>
                            <i class="tg">&lt;</i><i class="s">div</i><i class="tg">&gt;</i>
                                <i class="b3">{</i> <i class="f">__</i><i class="b1">(</i>
                                    <i class="q">&#x27;This is how background and font color look together.&#x27;</i>,
                                    <i class="q">&#x27;hero-color-picker&#x27;</i>
                                <i class="b1">)</i> <i class="b3">}</i>
                            <i class="tg">&lt;/</i><i class="s">div</i><i class="tg">&gt;</i>
                        <i class="tg">&lt;/</i><i class="s">div</i><i class="tg">&gt;</i>
                    <i class="tg">&lt;/</i><i class="s">div</i><i class="tg">&gt;</i>
                <i class="tg">&lt;/</i><i class="s">div</i><i class="tg">&gt;</i>
            <i class="tg">&lt;/</i><i class="ty">PanelRow</i><i class="tg">&gt;</i>
        <i class="tg">&lt;/</i><i class="ty">PluginDocumentSettingPanel</i><i class="tg">&gt;</i>
    <i class="b2">)</i>;
<i class="b1">}</i>

<i class="f">registerPlugin</i><i class="b1">(</i> <i class="q">&#x27;hero-color-picker&#x27;</i>, <i class="b2">{</i> <i class="v">render</i>: <i class="v">HeroColorPickerPanel</i> <i class="b2">}</i> <i class="b1">)</i>;</pre></div>
<div class="a" style="left:2964px;top:260px;width:1px;height:1178px;background:#161616;"></div>
<div class="a" style="left:2964px;top:260px;width:28px;height:136px;background:#424242;"></div>
<div class="a" style="left:2965px;top:1245px;width:27px;height:4px;background:#8e8e8a;"></div>
<div class="a" style="left:1511px;top:1495px;width:120px;height:2px;background:#3a7fdc;"></div>
<div class="a" style="left:2855px;top:1459px;width:2px;height:32px;background:#5a5a5a;"></div>
<div class="code" style="left:970px;top:1510px;line-height:28px;height:28px;color:#cfcfcf;letter-spacing:-1px;">marc@mbp hero-color-picker % git pull</div>
<div class="code" style="left:970px;top:1538px;line-height:28px;height:28px;color:#cfcfcf;letter-spacing:-1px;">Already up to date.</div>
<div class="code" style="left:970px;top:1566px;line-height:28px;height:28px;color:#cfcfcf;letter-spacing:-1px;">marc@mbp hero-color-picker % </div>
<div class="a" style="left:944px;top:1514px;width:16px;height:16px;background:#3b8eb8;border-radius:50%;"></div>
<div class="a" style="left:944px;top:1570px;width:16px;height:16px;border-radius:50%;box-sizing:border-box;border:3px solid #5a5a5a;"></div>
<div class="a" style="left:1376px;top:1565px;width:14px;height:26px;box-sizing:border-box;border:2px solid #cfcfcf;"></div>
<div class="a" style="left:2964px;top:1508px;width:28px;height:84px;background:#181818;box-sizing:border-box;border-left:1px solid #0e0e0e;border-top:1px solid #0e0e0e;"></div>
<div class="a" style="left:2983px;top:1557px;width:9px;height:13px;background:#e05a5a;"></div>
<div class="a" style="left:2965px;top:1583px;width:9px;height:9px;background:#5a9cc0;"></div>
<span class="t" style="left:1431.0px;top:93px;font-size:26px;line-height:34px;color:#cccccc;letter-spacing:0.231px;">hero-color-picker</span>
<span class="t" style="left:2228.5px;top:95px;font-size:23px;line-height:30px;color:#d6d6d6;">3</span>
<span class="t" style="left:248.0px;top:168px;font-size:22px;line-height:29px;color:#cccccc;letter-spacing:-0.250px;">CODEX</span>
<span class="t" style="left:278.0px;top:231px;font-size:24px;line-height:31px;color:#d6d6d6;letter-spacing:0.712px;">Feldfarbe über Colorpicker setzen</span>
<span class="t" style="left:252.5px;top:327px;font-size:26px;line-height:34px;color:#d2d2d2;letter-spacing:0.559px;">Version ist auf</span>
<span class="t" style="left:444.1px;top:330px;font-size:25.5px;line-height:33px;color:#d4d4d4;font-family:'Liberation Mono',monospace;letter-spacing:-1.053px;-webkit-text-stroke:0.5px;">1.0.6</span>
<span class="t" style="left:535.5px;top:327px;font-size:26px;line-height:34px;color:#d2d2d2;letter-spacing:0.412px;">angehoben.</span>
<span class="t" style="left:252.5px;top:382px;font-size:26px;line-height:34px;color:#d2d2d2;letter-spacing:0.595px;">Geändert:</span>
<span class="t" style="left:284.5px;top:437px;font-size:26px;line-height:34px;color:#6cb0f6;letter-spacing:0.885px;">hero-color-picker.php (line 6)</span>
<span class="t" style="left:650.0px;top:437px;font-size:26px;line-height:34px;color:#d2d2d2;">(</span>
<span class="t" style="left:669.9px;top:440px;font-size:25.5px;line-height:33px;color:#d4d4d4;font-family:'Liberation Mono',monospace;letter-spacing:-0.620px;-webkit-text-stroke:0.5px;">Version</span>
<span class="t" style="left:785.5px;top:437px;font-size:26px;line-height:34px;color:#d2d2d2;">)</span>
<span class="t" style="left:284.5px;top:488px;font-size:26px;line-height:34px;color:#6cb0f6;letter-spacing:0.528px;">package.json (line 3)</span>
<span class="t" style="left:544.5px;top:488px;font-size:26px;line-height:34px;color:#d2d2d2;">(</span>
<span class="t" style="left:564.2px;top:491px;font-size:25.5px;line-height:33px;color:#d4d4d4;font-family:'Liberation Mono',monospace;letter-spacing:-0.637px;-webkit-text-stroke:0.5px;">version</span>
<span class="t" style="left:680.0px;top:488px;font-size:26px;line-height:34px;color:#d2d2d2;">)</span>
<span class="t" style="left:284.8px;top:539px;font-size:26px;line-height:34px;color:#6cb0f6;letter-spacing:0.661px;">package-lock.json (line 3)</span>
<span class="t" style="left:606.3px;top:539px;font-size:26px;line-height:34px;color:#d2d2d2;letter-spacing:0.558px;">+ Root-Package-</span>
<span class="t" style="left:284.8px;top:577px;font-size:26px;line-height:34px;color:#d2d2d2;letter-spacing:0.230px;">Eintrag</span>
<span class="t" style="left:284.8px;top:629px;font-size:26px;line-height:34px;color:#6cb0f6;letter-spacing:0.551px;">readme.txt (line 6)</span>
<span class="t" style="left:516.3px;top:629px;font-size:26px;line-height:34px;color:#d2d2d2;">(</span>
<span class="t" style="left:534.9px;top:632px;font-size:25.5px;line-height:33px;color:#d4d4d4;font-family:'Liberation Mono',monospace;letter-spacing:-0.692px;-webkit-text-stroke:0.5px;">Stable tag</span>
<span class="t" style="left:694.5px;top:629px;font-size:26px;line-height:34px;color:#d2d2d2;letter-spacing:0.365px;">) und neuer</span>
<span class="t" style="left:284.8px;top:668px;font-size:26px;line-height:34px;color:#d2d2d2;letter-spacing:0.646px;">Changelog-Block</span>
<span class="t" style="left:513.1px;top:671px;font-size:25.5px;line-height:33px;color:#d4d4d4;font-family:'Liberation Mono',monospace;letter-spacing:-0.928px;-webkit-text-stroke:0.5px;">1.0.6</span>
<span class="t" style="left:252.5px;top:739px;font-size:26px;line-height:34px;color:#d2d2d2;letter-spacing:0.633px;">Wenn du willst, committe ich das direkt.</span>
<span class="t" style="left:276.7px;top:890px;font-size:26px;line-height:34px;color:#d2d2d2;letter-spacing:0.626px;">4 files changed</span>
<span class="t" style="left:470.4px;top:890px;font-size:26px;line-height:34px;color:#8bd184;letter-spacing:0.972px;">+9</span>
<span class="t" style="left:511.7px;top:890px;font-size:26px;line-height:34px;color:#e8564e;letter-spacing:1.588px;">-5</span>
<span class="t" style="left:610.3px;top:892px;font-size:24px;line-height:31px;color:#d2d2d2;letter-spacing:0.406px;">Undo</span>
<span class="t" style="left:743.5px;top:892px;font-size:24px;line-height:31px;color:#d2d2d2;letter-spacing:-0.117px;">Review</span>
<span class="t" style="left:276.7px;top:953px;font-size:26px;line-height:34px;color:#d2d2d2;letter-spacing:0.932px;">hero-color-picker.php</span>
<span class="t" style="left:558.0px;top:953px;font-size:26px;line-height:34px;color:#86b884;">+1</span>
<span class="t" style="left:597.5px;top:953px;font-size:26px;line-height:34px;color:#c9614c;">-1</span>
<span class="t" style="left:276.7px;top:1015px;font-size:26px;line-height:34px;color:#d2d2d2;letter-spacing:0.757px;">package-lock.json</span>
<span class="t" style="left:515.2px;top:1015px;font-size:26px;line-height:34px;color:#86b884;">+2</span>
<span class="t" style="left:554.5px;top:1015px;font-size:26px;line-height:34px;color:#c9614c;">-2</span>
<span class="t" style="left:276.7px;top:1075px;font-size:26px;line-height:34px;color:#d2d2d2;letter-spacing:0.455px;">package.json</span>
<span class="t" style="left:452.9px;top:1075px;font-size:26px;line-height:34px;color:#86b884;">+1</span>
<span class="t" style="left:492.5px;top:1075px;font-size:26px;line-height:34px;color:#c9614c;">-1</span>
<span class="t" style="left:276.7px;top:1135px;font-size:26px;line-height:34px;color:#d2d2d2;letter-spacing:0.647px;">readme.txt</span>
<span class="t" style="left:423.5px;top:1135px;font-size:26px;line-height:34px;color:#86b884;">+5</span>
<span class="t" style="left:462.7px;top:1135px;font-size:26px;line-height:34px;color:#c9614c;">-1</span>
<span class="t" style="left:422.0px;top:1242px;font-size:26px;line-height:34px;color:#dcdcdc;letter-spacing:0.738px;">and commit with a good commit</span>
<span class="t" style="left:422.0px;top:1281px;font-size:26px;line-height:34px;color:#dcdcdc;letter-spacing:0.243px;">message</span>
<span class="t" style="left:994.8px;top:165px;font-size:26px;line-height:34px;color:#9d9d9d;letter-spacing:0.637px;">readme.txt</span>
<span class="t" style="left:1247.0px;top:165px;font-size:26px;line-height:34px;color:#ffffff;letter-spacing:0.480px;font-style:italic;">index.js</span>
<span class="t" style="left:1212.0px;top:168px;font-size:20px;line-height:26px;color:#cbcb41;font-weight:700;-webkit-text-stroke:0;transform:scaleX(0.82);transform-origin:0 50%;">JS</span>
<span class="t" style="left:962.5px;top:222px;font-size:26px;line-height:34px;color:#a9a9a9;letter-spacing:0.443px;">src</span>
<span class="t" style="left:1040.6px;top:225px;font-size:20px;line-height:26px;color:#cbcb41;font-weight:700;-webkit-text-stroke:0;transform:scaleX(0.82);transform-origin:0 50%;">JS</span>
<span class="t" style="left:1076.0px;top:222px;font-size:26px;line-height:34px;color:#a9a9a9;letter-spacing:0.230px;">index.js</span>
<span class="t" style="left:1238.0px;top:222px;font-size:26px;line-height:34px;color:#a9a9a9;letter-spacing:0.288px;">HeroColorPickerPanel</span>
<span class="t" style="left:970.0px;top:1460px;font-size:22px;line-height:29px;color:#9d9d9d;letter-spacing:-0.483px;">PROBLEMS</span>
<span class="t" style="left:1138.4px;top:1460px;font-size:22px;line-height:29px;color:#9d9d9d;letter-spacing:0.024px;">OUTPUT</span>
<span class="t" style="left:1278.0px;top:1460px;font-size:22px;line-height:29px;color:#9d9d9d;letter-spacing:-0.226px;">DEBUG CONSOLE</span>
<span class="t" style="left:1516.0px;top:1460px;font-size:22px;line-height:29px;color:#e7e7e7;letter-spacing:-0.119px;">TERMINAL</span>
<span class="t" style="left:1675.3px;top:1460px;font-size:22px;line-height:29px;color:#9d9d9d;letter-spacing:-0.578px;">PORTS</span>
<span class="t" style="left:2562.0px;top:1459px;font-size:24px;line-height:31px;color:#cccccc;letter-spacing:-0.786px;">zsh</span>
<span class="t" style="left:231.0px;top:1599px;font-size:24px;line-height:31px;color:#cccccc;letter-spacing:0.242px;">main</span>
<span class="t" style="left:400.6px;top:1599px;font-size:24px;line-height:31px;color:#cccccc;">0</span>
<span class="t" style="left:461.3px;top:1599px;font-size:24px;line-height:31px;color:#cccccc;">0</span>
<span class="t" style="left:1781.7px;top:1599px;font-size:24px;line-height:31px;color:#cccccc;letter-spacing:0.596px;">Marc Tönsing (22 minutes ago)</span>
<span class="t" style="left:2165.6px;top:1599px;font-size:24px;line-height:31px;color:#cccccc;letter-spacing:0.734px;">Ln 238, Col 25</span>
<span class="t" style="left:2366.0px;top:1599px;font-size:24px;line-height:31px;color:#cccccc;letter-spacing:0.297px;">Tab Size: 4</span>
<span class="t" style="left:2521.6px;top:1599px;font-size:24px;line-height:31px;color:#cccccc;letter-spacing:0.800px;">UTF-8</span>
<span class="t" style="left:2626.6px;top:1599px;font-size:24px;line-height:31px;color:#cccccc;letter-spacing:-1.008px;">LF</span>
<span class="t" style="left:2688.5px;top:1598px;font-size:24px;line-height:31px;color:#cccccc;letter-spacing:1.299px;">{ }</span>
<span class="t" style="left:2729.8px;top:1599px;font-size:24px;line-height:31px;color:#cccccc;letter-spacing:0.565px;">JavaScript</span>
<span class="t" style="left:299.3px;top:1541px;font-size:24.5px;line-height:31px;color:#9d9d9d;letter-spacing:-0.116px;">Local</span>
<span class="t" style="left:471.5px;top:1541px;font-size:24.5px;line-height:31px;color:#9d9d9d;letter-spacing:0.361px;">Default permissions</span>
<div class="a" style="left:240px;top:1316px;width:656px;height:9px;background:linear-gradient(rgba(24,24,24,0),rgba(24,24,24,0.85));"></div>
<div class="a" style="left:232.5px;top:1324px;width:671.5px;height:195.5px;background:#313131;border-radius:41px;box-sizing:border-box;border:1.5px solid #2a2a2a;"></div>
<div class="a" style="left:536px;top:1212px;width:64px;height:64px;background:#181818;border-radius:50%;box-sizing:border-box;border:2px solid #2e2e2e;"></div>
<div class="a" style="left:575px;top:1458px;width:2px;height:32px;background:#474747;"></div>
<div class="a" style="left:830px;top:1446px;width:56px;height:56px;background:#8a8a8a;border-radius:50%;"></div>
<span class="t" style="left:258.7px;top:1353px;font-size:26px;line-height:34px;color:#686868;letter-spacing:0.691px;">Ask for follow-up changes</span>
<span class="t" style="left:334.8px;top:1458px;font-size:25px;line-height:32px;color:#a3a3a3;letter-spacing:0.293px;-webkit-text-stroke:0.15px;">GPT-5.3-Codex</span>
<span class="t" style="left:643.0px;top:1458px;font-size:25px;line-height:32px;color:#6cb0f6;letter-spacing:-0.058px;-webkit-text-stroke:0.25px;">IDE context</span>
<svg width="3104" height="1784" viewBox="0 0 3104 1784" style="left:0;top:0;"><path d="M162 171.3 H151.5 a5.3 5.3 0 0 0 -5.3 5.3 V205 a5.3 5.3 0 0 0 5.3 5.3 H171.2 a5.3 5.3 0 0 0 5.3 -5.3 V185.8 L162 171.3 V180.5 a5.3 5.3 0 0 0 5.3 5.3 H176.5" fill="none" stroke="#868686" stroke-width="3" stroke-linecap="round" stroke-linejoin="round" />
<path d="M140.3 178.5 V203.5 a12.8 12.8 0 0 0 12.8 12.8 H169.5" fill="none" stroke="#868686" stroke-width="3" stroke-linecap="round" stroke-linejoin="round" />
<circle cx="155.5" cy="285.4" r="14.9" fill="none" stroke="#868686" stroke-width="3" />
<path d="M166.3 296.3 L180 310" fill="none" stroke="#868686" stroke-width="3" stroke-linecap="round" stroke-linejoin="round" />
<circle cx="149.4" cy="369.4" r="5.9" fill="none" stroke="#868686" stroke-width="3" />
<circle cx="170.4" cy="378.3" r="5.9" fill="none" stroke="#868686" stroke-width="3" />
<circle cx="149.4" cy="402.7" r="5.9" fill="none" stroke="#868686" stroke-width="3" />
<path d="M149.4 375.5 V396.6" fill="none" stroke="#868686" stroke-width="3" stroke-linecap="round" stroke-linejoin="round" />
<path d="M170.4 384.5 c0 4 -3 6 -7.5 6 H157 c-4.5 0 -7.6 2.5 -7.6 6" fill="none" stroke="#868686" stroke-width="3" stroke-linecap="round" stroke-linejoin="round" />
<path d="M146.2 478.5 V468.3 a3.4 3.4 0 0 1 5 -3 L174.6 478.6 a3.3 3.3 0 0 1 0 5.8 L162 491.6" fill="none" stroke="#868686" stroke-width="3" stroke-linecap="round" stroke-linejoin="round" />
<path d="M141.3 491.5 a6.5 6.5 0 0 1 13 0 V498.5 a6.5 6.5 0 0 1 -13 0 Z" fill="none" stroke="#868686" stroke-width="3" stroke-linecap="round" stroke-linejoin="round" />
<path d="M142 489.5 a5.9 5.9 0 0 1 11.8 0 Z" fill="none" stroke="#868686" stroke-width="2.6" stroke-linecap="round" stroke-linejoin="round" />
<path d="M136.6 495 H141 M154.6 495 H159 M137 486 L141.5 489.8 M158.8 486 L154.3 489.8 M137 504.5 L141.8 500.3 M158.8 504.5 L154 500.3" fill="none" stroke="#868686" stroke-width="2.8" stroke-linecap="round" stroke-linejoin="round" />
<path d="M158.3 579.3 V565 a3.7 3.7 0 0 0 -3.7 -3.7 H144.4 a3.7 3.7 0 0 0 -3.7 3.7 V593.5 a3.7 3.7 0 0 0 3.7 3.7 H172.9 a3.7 3.7 0 0 0 3.7 -3.7 V583 a3.7 3.7 0 0 0 -3.7 -3.7 H140.7 M158.3 579.3 V597.2" fill="none" stroke="#868686" stroke-width="3" stroke-linecap="round" stroke-linejoin="round" />
<path d="M166.9 559.2 a3.5 3.5 0 0 1 5 0 l7 7 a3.5 3.5 0 0 1 0 5 l-7 7 a3.5 3.5 0 0 1 -5 0 l-7 -7 a3.5 3.5 0 0 1 0 -5 Z" fill="none" stroke="#868686" stroke-width="3" stroke-linecap="round" stroke-linejoin="round" />
<path d="M140.3 665.5 L161 657 a4 4 0 0 1 3 0 L179.7 663 V682.5 L158.5 691 a3.5 3.5 0 0 1 -3 0 L140.3 683.8 Z" fill="none" stroke="#868686" stroke-width="3" stroke-linecap="round" stroke-linejoin="round" />
<path d="M140.3 665.5 L157 672.2 L179.7 663 M157 672.2 V691 M147.8 669 V687.2" fill="none" stroke="#868686" stroke-width="3" stroke-linecap="round" stroke-linejoin="round" />
<path d="M162.6 674.5 V686.4 M166.7 672.8 V684.7 M170.7 671.2 V683.1 M174.8 669.5 V681.4" fill="none" stroke="#868686" stroke-width="2" stroke-linecap="round" stroke-linejoin="round" />
<rect x="140" y="749.7" width="17.3" height="17.5" rx="3.5" fill="none" stroke="#868686" stroke-width="3.2" />
<rect x="163.1" y="772.7" width="17" height="17.4" rx="3.5" fill="none" stroke="#868686" stroke-width="3.2" />
<path d="M148.6 768 V776.5 a5 5 0 0 0 5 5 H162" fill="none" stroke="#868686" stroke-width="3.1" stroke-linecap="round" stroke-linejoin="round" />
<path transform="translate(135.6,841.5) scale(2.03)" d="M22.2819 9.8211a5.9847 5.9847 0 0 0-.5157-4.9108 6.0462 6.0462 0 0 0-6.5098-2.9A6.0651 6.0651 0 0 0 4.9807 4.1818a5.9847 5.9847 0 0 0-3.9977 2.9 6.0462 6.0462 0 0 0 .7427 7.0966 5.98 5.98 0 0 0 .511 4.9107 6.051 6.051 0 0 0 6.5146 2.9001A5.9847 5.9847 0 0 0 13.2599 24a6.0557 6.0557 0 0 0 5.7718-4.2058 5.9894 5.9894 0 0 0 3.9977-2.9001 6.0557 6.0557 0 0 0-.7475-7.0729zm-9.022 12.6081a4.4755 4.4755 0 0 1-2.8764-1.0408l.1419-.0804 4.7783-2.7582a.7948.7948 0 0 0 .3927-.6813v-6.7369l2.02 1.1686a.071.071 0 0 1 .038.052v5.5826a4.504 4.504 0 0 1-4.4945 4.4944zm-9.6607-4.1254a4.4708 4.4708 0 0 1-.5346-3.0137l.142.0852 4.783 2.7582a.7712.7712 0 0 0 .7806 0l5.8428-3.3685v2.3324a.0804.0804 0 0 1-.0332.0615L9.74 19.9502a4.4992 4.4992 0 0 1-6.1408-1.6464zM2.3408 7.8956a4.485 4.485 0 0 1 2.3655-1.9728V11.6a.7664.7664 0 0 0 .3879.6765l5.8144 3.3543-2.0201 1.1685a.0757.0757 0 0 1-.071 0l-4.8303-2.7865A4.504 4.504 0 0 1 2.3408 7.872zm16.5963 3.8558L13.1038 8.364 15.1192 7.2a.0757.0757 0 0 1 .071 0l4.8303 2.7913a4.4944 4.4944 0 0 1-.6765 8.1042v-5.6772a.79.79 0 0 0-.407-.667zm2.0107-3.0231l-.142-.0852-4.7735-2.7818a.7759.7759 0 0 0-.7854 0L9.409 9.2297V6.8974a.0662.0662 0 0 1 .0284-.0615l4.8303-2.7866a4.4992 4.4992 0 0 1 6.6802 4.66zM8.3065 12.863l-2.02-1.1638a.0804.0804 0 0 1-.038-.0567V6.0742a4.4992 4.4992 0 0 1 7.3757-3.4537l-.142.0805L8.704 5.459a.7948.7948 0 0 0-.3927.6813zm1.0976-2.3654l2.602-1.4998 2.6069 1.4998v2.9994l-2.5974 1.4997-2.6067-1.4997Z" fill="#d7d7d7"/>
<path transform="translate(2825.6,164.8) scale(1.36)" d="M22.2819 9.8211a5.9847 5.9847 0 0 0-.5157-4.9108 6.0462 6.0462 0 0 0-6.5098-2.9A6.0651 6.0651 0 0 0 4.9807 4.1818a5.9847 5.9847 0 0 0-3.9977 2.9 6.0462 6.0462 0 0 0 .7427 7.0966 5.98 5.98 0 0 0 .511 4.9107 6.051 6.051 0 0 0 6.5146 2.9001A5.9847 5.9847 0 0 0 13.2599 24a6.0557 6.0557 0 0 0 5.7718-4.2058 5.9894 5.9894 0 0 0 3.9977-2.9001 6.0557 6.0557 0 0 0-.7475-7.0729zm-9.022 12.6081a4.4755 4.4755 0 0 1-2.8764-1.0408l.1419-.0804 4.7783-2.7582a.7948.7948 0 0 0 .3927-.6813v-6.7369l2.02 1.1686a.071.071 0 0 1 .038.052v5.5826a4.504 4.504 0 0 1-4.4945 4.4944zm-9.6607-4.1254a4.4708 4.4708 0 0 1-.5346-3.0137l.142.0852 4.783 2.7582a.7712.7712 0 0 0 .7806 0l5.8428-3.3685v2.3324a.0804.0804 0 0 1-.0332.0615L9.74 19.9502a4.4992 4.4992 0 0 1-6.1408-1.6464zM2.3408 7.8956a4.485 4.485 0 0 1 2.3655-1.9728V11.6a.7664.7664 0 0 0 .3879.6765l5.8144 3.3543-2.0201 1.1685a.0757.0757 0 0 1-.071 0l-4.8303-2.7865A4.504 4.504 0 0 1 2.3408 7.872zm16.5963 3.8558L13.1038 8.364 15.1192 7.2a.0757.0757 0 0 1 .071 0l4.8303 2.7913a4.4944 4.4944 0 0 1-.6765 8.1042v-5.6772a.79.79 0 0 0-.407-.667zm2.0107-3.0231l-.142-.0852-4.7735-2.7818a.7759.7759 0 0 0-.7854 0L9.409 9.2297V6.8974a.0662.0662 0 0 1 .0284-.0615l4.8303-2.7866a4.4992 4.4992 0 0 1 6.6802 4.66zM8.3065 12.863l-2.02-1.1638a.0804.0804 0 0 1-.038-.0567V6.0742a4.4992 4.4992 0 0 1 7.3757-3.4537l-.142.0805L8.704 5.459a.7948.7948 0 0 0-.3927.6813zm1.0976-2.3654l2.602-1.4998 2.6069 1.4998v2.9994l-2.5974 1.4997-2.6067-1.4997Z" fill="#ffffff"/>
<rect x="112" y="818" width="4" height="96" fill="#3a80de"/>
<circle cx="160" cy="1447.8" r="19.4" fill="none" stroke="#868686" stroke-width="3" />
<circle cx="160" cy="1440" r="5.9" fill="#868686" stroke="#868686" stroke-width="0" />
<path d="M149 1450.5 a2.3 2.3 0 0 1 2.3 -2.3 h17.4 a2.3 2.3 0 0 1 2.3 2.3 c0 6.5 -5 10.6 -11 10.6 s-11 -4.1 -11 -10.6 Z" fill="#868686" stroke="#868686" stroke-width="0" stroke-linecap="round" stroke-linejoin="round" />
<path d="M155.13 1531.30 L155.31 1525.18 L164.69 1525.18 L164.87 1531.30 L168.56 1533.43 L173.96 1530.52 L178.65 1538.65 L173.43 1541.87 L173.43 1546.13 L178.65 1549.35 L173.96 1557.48 L168.56 1554.57 L164.87 1556.70 L164.69 1562.82 L155.31 1562.82 L155.13 1556.70 L151.44 1554.57 L146.04 1557.48 L141.35 1549.35 L146.57 1546.13 L146.57 1541.87 L141.35 1538.65 L146.04 1530.52 L151.44 1533.43 Z" fill="none" stroke="#868686" stroke-width="3.2" stroke-linecap="round" stroke-linejoin="round" />
<circle cx="160" cy="1544" r="4.4" fill="none" stroke="#868686" stroke-width="3.2" />
<path d="M877.5 110 H855 M865.3 100.3 L855 110 L865.3 119.7" fill="none" stroke="#d0d0d0" stroke-width="2.4" stroke-linecap="round" stroke-linejoin="round" />
<path d="M906.3 110 H929 M918.7 100.3 L929 110 L918.7 119.7" fill="none" stroke="#7d7d7d" stroke-width="2.4" stroke-linecap="round" stroke-linejoin="round" />
<circle cx="1404.5" cy="107.2" r="8.8" fill="none" stroke="#a8a8a8" stroke-width="1.8" />
<path d="M1411 113.6 L1417.5 120" fill="none" stroke="#a8a8a8" stroke-width="1.8" stroke-linecap="round" stroke-linejoin="round" />
<path d="M2109 100.3 H2100.5 a5 5 0 0 0 -5 5 V113.5 a5 5 0 0 0 5 5 H2101.5 V123.3 L2108 118.5 H2117 a5 5 0 0 0 5 -5 V112" fill="none" stroke="#d4d4d4" stroke-width="2" stroke-linecap="round" stroke-linejoin="round" />
<path d="M2117 94.5 l1.2 3.6 l3.6 1.2 l-3.6 1.2 l-1.2 3.6 l-1.2 -3.6 l-3.6 -1.2 l3.6 -1.2 Z" fill="#d4d4d4" stroke="#d4d4d4" stroke-width="0.6" stroke-linecap="round" stroke-linejoin="round" />
<path d="M2122.3 102.5 l0.9 2.6 l2.6 0.9 l-2.6 0.9 l-0.9 2.6 l-0.9 -2.6 l-2.6 -0.9 l2.6 -0.9 Z" fill="#d4d4d4" stroke="#d4d4d4" stroke-width="0.5" stroke-linecap="round" stroke-linejoin="round" />
<path d="M2147.5 106.5 L2154.8 113.8 L2162 106.5" fill="none" stroke="#d4d4d4" stroke-width="1.8" stroke-linecap="round" stroke-linejoin="round" />
<rect x="2777" y="97" width="10" height="26" rx="3" fill="none" stroke="#d6d6d6" stroke-width="2" />
<rect x="2793" y="97" width="10" height="10" rx="3" fill="none" stroke="#d6d6d6" stroke-width="2" />
<rect x="2793" y="113" width="10" height="10" rx="3" fill="none" stroke="#d6d6d6" stroke-width="2" />
<rect x="2829" y="97" width="26" height="26" rx="5.5" fill="none" stroke="#d6d6d6" stroke-width="2" />
<path d="M2839.5 97 H2834.5 a5.5 5.5 0 0 0 -5.5 5.5 V117.5 a5.5 5.5 0 0 0 5.5 5.5 H2839.5 Z" fill="#d6d6d6" stroke="#d6d6d6" stroke-width="1" stroke-linecap="round" stroke-linejoin="round" />
<rect x="2881" y="97" width="26" height="26" rx="5.5" fill="none" stroke="#d6d6d6" stroke-width="2" />
<path d="M2881 114.5 V117.5 a5.5 5.5 0 0 0 5.5 5.5 H2901.5 a5.5 5.5 0 0 0 5.5 -5.5 V114.5 Z" fill="#d6d6d6" stroke="#d6d6d6" stroke-width="1" stroke-linecap="round" stroke-linejoin="round" />
<rect x="2933" y="97" width="26" height="26" rx="5.5" fill="none" stroke="#d6d6d6" stroke-width="2" />
<path d="M2949 97 V123" fill="none" stroke="#d6d6d6" stroke-width="2" stroke-linecap="round" stroke-linejoin="round" />
<path d="M258.8 246.2 H241.8 M248.6 239.2 L241.6 246.2 L248.6 253.2" fill="none" stroke="#717171" stroke-width="2" stroke-linecap="round" stroke-linejoin="round" />
<path d="M760.6 250.5 A10.6 10.6 0 1 0 764 237.8" fill="none" stroke="#a2a2a2" stroke-width="2.3" stroke-linecap="round" stroke-linejoin="round" />
<path d="M759.3 236.5 V243 H765.8" fill="none" stroke="#a2a2a2" stroke-width="2.3" stroke-linecap="round" stroke-linejoin="round" />
<path d="M770.7 240.5 V246.6 L767.3 250" fill="none" stroke="#a2a2a2" stroke-width="2.3" stroke-linecap="round" stroke-linejoin="round" />
<path d="M821.60 234.70 L822.37 234.85 L823.09 235.30 L823.72 235.96 L824.24 236.75 L824.67 237.56 L825.04 238.29 L825.42 238.86 L825.85 239.24 L826.39 239.42 L827.08 239.46 L827.90 239.42 L828.81 239.39 L829.76 239.45 L830.65 239.66 L831.39 240.06 L831.91 240.65 L832.16 241.39 L832.13 242.24 L831.87 243.11 L831.45 243.96 L830.97 244.74 L830.52 245.43 L830.21 246.04 L830.10 246.60 L830.21 247.16 L830.52 247.77 L830.97 248.46 L831.45 249.24 L831.87 250.09 L832.13 250.96 L832.16 251.81 L831.91 252.55 L831.39 253.14 L830.65 253.54 L829.76 253.75 L828.81 253.81 L827.90 253.78 L827.08 253.74 L826.39 253.78 L825.85 253.96 L825.42 254.34 L825.04 254.91 L824.67 255.64 L824.24 256.45 L823.72 257.24 L823.09 257.90 L822.37 258.35 L821.60 258.50 L820.83 258.35 L820.11 257.90 L819.48 257.24 L818.96 256.45 L818.53 255.64 L818.16 254.91 L817.78 254.34 L817.35 253.96 L816.81 253.78 L816.12 253.74 L815.30 253.78 L814.39 253.81 L813.44 253.75 L812.55 253.54 L811.81 253.14 L811.29 252.55 L811.04 251.81 L811.07 250.96 L811.33 250.09 L811.75 249.24 L812.23 248.46 L812.68 247.77 L812.99 247.16 L813.10 246.60 L812.99 246.04 L812.68 245.43 L812.23 244.74 L811.75 243.96 L811.33 243.11 L811.07 242.24 L811.04 241.39 L811.29 240.65 L811.81 240.06 L812.55 239.66 L813.44 239.45 L814.39 239.39 L815.30 239.42 L816.12 239.46 L816.81 239.42 L817.35 239.24 L817.78 238.86 L818.16 238.29 L818.53 237.56 L818.96 236.75 L819.48 235.96 L820.11 235.30 L820.83 234.85 L821.60 234.70Z" fill="none" stroke="#a2a2a2" stroke-width="2.3" stroke-linecap="round" stroke-linejoin="round" />
<circle cx="821.6" cy="246.6" r="3.6" fill="none" stroke="#a2a2a2" stroke-width="2.3" />
<path d="M873 235.3 H869.5 a6.2 6.2 0 0 0 -6.2 6.2 V250.7 a6.2 6.2 0 0 0 6.2 6.2 H878.7 a6.2 6.2 0 0 0 6.2 -6.2 V247.5" fill="none" stroke="#a2a2a2" stroke-width="2.3" stroke-linecap="round" stroke-linejoin="round" />
<path d="M870.5 250 L872 244.5 L880.5 236 a2.6 2.6 0 0 1 3.7 3.7 L875.7 248.2 Z" fill="none" stroke="#a2a2a2" stroke-width="2.3" stroke-linecap="round" stroke-linejoin="round" />
<path d="M683 901.4 H695.3 a6.8 6.8 0 0 1 0 13.6 H689.2" fill="none" stroke="#9c9c9c" stroke-width="1.9" stroke-linecap="round" stroke-linejoin="round" />
<path d="M688.2 896.4 L683 901.4 L688.2 906.4" fill="none" stroke="#9c9c9c" stroke-width="1.9" stroke-linecap="round" stroke-linejoin="round" />
<path d="M838 914.5 L851.5 901 M841 900.5 H852 V911.5" fill="none" stroke="#a8a8a8" stroke-width="2" stroke-linecap="round" stroke-linejoin="round" />
<path d="M568 1230.5 V1257 M555.8 1245.2 L568 1257.4 L580.2 1245.2" fill="none" stroke="#e0e0e0" stroke-width="2.4" stroke-linecap="round" stroke-linejoin="round" />
<path d="M278.3 1462 V1487 M265.8 1474.5 H290.8" fill="none" stroke="#b3b3b3" stroke-width="2" stroke-linecap="round" stroke-linejoin="round" />
<path d="M527.3 1470.5 L535.4 1478.7 L543.5 1470.5" fill="none" stroke="#a5a5a5" stroke-width="2.2" stroke-linecap="round" stroke-linejoin="round" />
<path d="M618 1474 L629.5 1477.5 L624.5 1480.3 L622.3 1486 Z" fill="none" stroke="#6cb0f6" stroke-width="2" stroke-linecap="round" stroke-linejoin="round" />
<path d="M615.8 1462.3 L616.7 1466.5 M624.5 1468.8 L627.8 1465.5 M607 1472.8 L611 1473.8 M610.5 1481.8 L613.7 1478.8" fill="none" stroke="#6cb0f6" stroke-width="2" stroke-linecap="round" stroke-linejoin="round" />
<path d="M858 1487 V1462 M847.3 1472.5 L858 1461.8 L868.7 1472.5" fill="none" stroke="#2c2c2c" stroke-width="2.4" stroke-linecap="round" stroke-linejoin="round" />
<path d="M267.5 1560.5 V1551 a2.8 2.8 0 0 1 2.8 -2.8 H282 a2.8 2.8 0 0 1 2.8 2.8 V1560.5 M265 1561 H287.5 v0.6 a2.6 2.6 0 0 1 -2.6 2.6 H267.6 a2.6 2.6 0 0 1 -2.6 -2.6 Z" fill="none" stroke="#a0a0a0" stroke-width="2" stroke-linecap="round" stroke-linejoin="round" />
<path d="M372.3 1552.8 L380.4 1561 L388.5 1552.8" fill="none" stroke="#a0a0a0" stroke-width="2.2" stroke-linecap="round" stroke-linejoin="round" />
<path d="M446.2 1544 L455.5 1547.2 a2 2 0 0 1 1.5 2 V1556 c0 6 -5 10 -10.8 11.3 C440.5 1566 435.5 1562 435.5 1556 V1549.2 a2 2 0 0 1 1.5 -2 Z" fill="none" stroke="#a0a0a0" stroke-width="2" stroke-linecap="round" stroke-linejoin="round" />
<path d="M441.3 1552.3 L444.6 1555.6 L441.3 1558.9 M447.3 1559.3 H451.5" fill="none" stroke="#a0a0a0" stroke-width="2" stroke-linecap="round" stroke-linejoin="round" />
<path d="M707.9 1552.8 L716 1561 L724.1 1552.8" fill="none" stroke="#a0a0a0" stroke-width="2.2" stroke-linecap="round" stroke-linejoin="round" />
<circle cx="876.3" cy="1555.9" r="10" fill="none" stroke="#2f2f2f" stroke-width="3.6" />
<path d="M872.8 1546.5 A10 10 0 0 1 884.5 1561.5" fill="none" stroke="#8c8c8c" stroke-width="3.6" stroke-linecap="round" stroke-linejoin="round" />
<circle cx="969.6" cy="180.7" r="11.2" fill="none" stroke="#5a9cc4" stroke-width="2" />
<circle cx="969.3" cy="174.6" r="1.7" fill="#5a9cc4" stroke="#5a9cc4" stroke-width="0" />
<path d="M966.6 178.6 H970.6 V186.2 M966.4 186.4 H973.2" fill="none" stroke="#5a9cc4" stroke-width="2" stroke-linecap="round" stroke-linejoin="round" stroke-linecap="butt"/>
<path d="M1383.7 172.5 L1401.2 190 M1401.2 172.5 L1383.7 190" fill="none" stroke="#e4e4e4" stroke-width="2" stroke-linecap="round" stroke-linejoin="round" />
<path d="M1011.3 229.3 L1020 238.2 L1011.3 247.1" fill="none" stroke="#a0a0a0" stroke-width="2" stroke-linecap="round" stroke-linejoin="round" />
<path d="M1179 229.3 L1187.7 238.2 L1179 247.1" fill="none" stroke="#a0a0a0" stroke-width="2" stroke-linecap="round" stroke-linejoin="round" />
<path d="M1213.6 225.7 a3.2 3.2 0 0 1 3 0 L1226.4 230.8 a3 3 0 0 1 1.6 2.7 V242.7 a3 3 0 0 1 -1.6 2.7 L1216.6 250.4 a3.2 3.2 0 0 1 -3 0 L1203.8 245.4 a3 3 0 0 1 -1.6 -2.7 V233.5 a3 3 0 0 1 1.6 -2.7 Z" fill="none" stroke="#b180d7" stroke-width="2" stroke-linecap="round" stroke-linejoin="round" />
<path d="M1207.4 233.2 L1215.1 237.6 L1222.8 233.2 M1215.1 237.6 V243.2" fill="none" stroke="#b180d7" stroke-width="2" stroke-linecap="round" stroke-linejoin="round" />
<rect x="2881" y="168" width="26" height="26" rx="5.5" fill="none" stroke="#d2d2d2" stroke-width="2" />
<path d="M2894 168 V194" fill="none" stroke="#d2d2d2" stroke-width="2" stroke-linecap="round" stroke-linejoin="round" />
<circle cx="2938" cy="181" r="2.2" fill="#d2d2d2" stroke="#d2d2d2" stroke-width="0" />
<circle cx="2946" cy="181" r="2.2" fill="#d2d2d2" stroke="#d2d2d2" stroke-width="0" />
<circle cx="2954" cy="181" r="2.2" fill="#d2d2d2" stroke="#d2d2d2" stroke-width="0" />
<rect x="2524" y="1462" width="26.2" height="26" rx="5" fill="none" stroke="#cfcfcf" stroke-width="2" />
<path d="M2529.5 1469.5 L2536 1475.8 L2529.5 1482 M2537.5 1482.5 H2545.5" fill="none" stroke="#cfcfcf" stroke-width="2" stroke-linecap="round" stroke-linejoin="round" />
<path d="M2632.8 1461.5 V1486.8 M2620.2 1474.1 H2645.4" fill="none" stroke="#cfcfcf" stroke-width="2" stroke-linecap="round" stroke-linejoin="round" />
<path d="M2658.6 1471.6 L2665.8 1478.8 L2673 1471.6" fill="none" stroke="#cfcfcf" stroke-width="1.8" stroke-linecap="round" stroke-linejoin="round" />
<rect x="2699" y="1462" width="26" height="26" rx="5" fill="none" stroke="#cfcfcf" stroke-width="2" />
<path d="M2712 1462 V1488" fill="none" stroke="#cfcfcf" stroke-width="2" stroke-linecap="round" stroke-linejoin="round" />
<path d="M2751.5 1464.5 H2776.5 M2759 1464 a5 5 0 0 1 10 0 M2754.5 1465 L2757 1485 a2.5 2.5 0 0 0 2.5 2.2 H2768.5 a2.5 2.5 0 0 0 2.5 -2.2 L2773.5 1465 M2760.8 1470 V1482 M2767.2 1470 V1482" fill="none" stroke="#cfcfcf" stroke-width="2" stroke-linecap="round" stroke-linejoin="round" />
<circle cx="2807.8" cy="1474.7" r="2" fill="#cfcfcf" stroke="#cfcfcf" stroke-width="0" />
<circle cx="2816.1" cy="1474.7" r="2" fill="#cfcfcf" stroke="#cfcfcf" stroke-width="0" />
<circle cx="2824.5" cy="1474.7" r="2" fill="#cfcfcf" stroke="#cfcfcf" stroke-width="0" />
<path d="M2883 1470 V1466.5 a3 3 0 0 1 3 -3 H2889.5 M2898.5 1463.5 H2902 a3 3 0 0 1 3 3 V1470 M2905 1478 V1481.5 a3 3 0 0 1 -3 3 H2898.5 M2889.5 1484.5 H2886 a3 3 0 0 1 -3 -3 V1478" fill="none" stroke="#cfcfcf" stroke-width="2" stroke-linecap="round" stroke-linejoin="round" />
<path d="M2937.3 1465.3 L2954.7 1482.7 M2954.7 1465.3 L2937.3 1482.7" fill="none" stroke="#cfcfcf" stroke-width="2" stroke-linecap="round" stroke-linejoin="round" />
<path d="M134.3 1609.8 L142.3 1618 L134.3 1626.2 M153.7 1601.8 L145.5 1610 L153.7 1618.2" fill="none" stroke="#d0d0d0" stroke-width="2" stroke-linecap="round" stroke-linejoin="round" />
<circle cx="200.9" cy="1602.7" r="3.8" fill="none" stroke="#d0d0d0" stroke-width="2" />
<circle cx="215.4" cy="1609.8" r="3.8" fill="none" stroke="#d0d0d0" stroke-width="2" />
<circle cx="200.9" cy="1625" r="3.8" fill="none" stroke="#d0d0d0" stroke-width="2" />
<path d="M200.9 1606.8 V1621 M215.4 1613.8 c0 3.5 -2.5 4.7 -6 4.7 H206.5 c-3.5 0 -5.6 1 -5.6 3" fill="none" stroke="#d0d0d0" stroke-width="2" stroke-linecap="round" stroke-linejoin="round" />
<path d="M303 1618.5 A10.3 10.3 0 0 1 314.5 1603.5 M322.6 1609 A10.3 10.3 0 0 1 311 1624" fill="none" stroke="#d0d0d0" stroke-width="2" stroke-linecap="round" stroke-linejoin="round" />
<path d="M310.5 1599.6 L314.8 1603.6 L310.8 1608 M315 1619.8 L310.8 1624 L315 1628.2" fill="none" stroke="#d0d0d0" stroke-width="2" stroke-linecap="round" stroke-linejoin="round" />
<circle cx="376.9" cy="1614" r="12.8" fill="none" stroke="#d0d0d0" stroke-width="2" />
<path d="M371.6 1608.7 L382.2 1619.3 M382.2 1608.7 L371.6 1619.3" fill="none" stroke="#d0d0d0" stroke-width="2" stroke-linecap="round" stroke-linejoin="round" />
<path d="M437.6 1601.8 L450 1624.3 H425.2 Z" fill="none" stroke="#d0d0d0" stroke-width="2" stroke-linecap="round" stroke-linejoin="round" />
<path d="M437.6 1609.5 V1616.5" fill="none" stroke="#d0d0d0" stroke-width="2.2" stroke-linecap="round" stroke-linejoin="round" />
<circle cx="437.6" cy="1620.3" r="1.4" fill="#d0d0d0" stroke="#d0d0d0" stroke-width="0" />
<circle cx="1758" cy="1614.5" r="5" fill="none" stroke="#d0d0d0" stroke-width="2" />
<path d="M1758 1601.5 V1609.3 M1758 1619.7 V1627.5" fill="none" stroke="#d0d0d0" stroke-width="2" stroke-linecap="round" stroke-linejoin="round" />
<path d="M2896 1600.3 c-5.5 0 -9 1.5 -10.3 4.7 c-1 2.4 -0.9 5 -0.3 7 c-2.6 1.4 -4.6 3.5 -4.6 5.5 v3.5 c0 1 0.5 1.8 1.3 2.3 c4 2.8 9 4.7 13.9 4.7 s9.9 -1.9 13.9 -4.7 c0.8 -0.5 1.3 -1.3 1.3 -2.3 v-3.5 c0 -2 -2 -4.1 -4.6 -5.5 c0.6 -2 0.7 -4.6 -0.3 -7 c-1.3 -3.2 -4.8 -4.7 -10.3 -4.7 Z" fill="#d0d0d0" stroke="#d0d0d0" stroke-width="0" stroke-linecap="round" stroke-linejoin="round" />
<rect x="2887.6" y="1603" width="7.6" height="8.5" rx="3" fill="#181818" stroke="#181818" stroke-width="0" />
<rect x="2896.8" y="1603" width="7.6" height="8.5" rx="3" fill="#181818" stroke="#181818" stroke-width="0" />
<path d="M2886.5 1613.5 c3 2 6 2.5 9.5 0 c3.5 2.5 6.5 2 9.5 0 V1621.5 c-3 2 -6 3 -9.5 3 s-6.5 -1 -9.5 -3 Z" fill="#181818" stroke="#181818" stroke-width="0" stroke-linecap="round" stroke-linejoin="round" />
<rect x="2891.3" y="1616" width="2.3" height="5" rx="1.1" fill="#d0d0d0" stroke="#d0d0d0" stroke-width="0" />
<rect x="2898.4" y="1616" width="2.3" height="5" rx="1.1" fill="#d0d0d0" stroke="#d0d0d0" stroke-width="0" />
<path d="M2950 1622 c2 -2.2 2.6 -4.5 2.6 -9 c0 -5.5 3.3 -9.8 7.6 -10 M2967.5 1612 c0 5 0.8 7.8 2.8 10 H2949.7 M2957 1622.5 a3.2 3.2 0 0 0 6.4 0" fill="none" stroke="#d0d0d0" stroke-width="2" stroke-linecap="round" stroke-linejoin="round" />
<circle cx="2967.7" cy="1606.2" r="5.6" fill="#d0d0d0" stroke="#d0d0d0" stroke-width="0" /></svg>
<div id="frame"></div></div>
</body></html>
